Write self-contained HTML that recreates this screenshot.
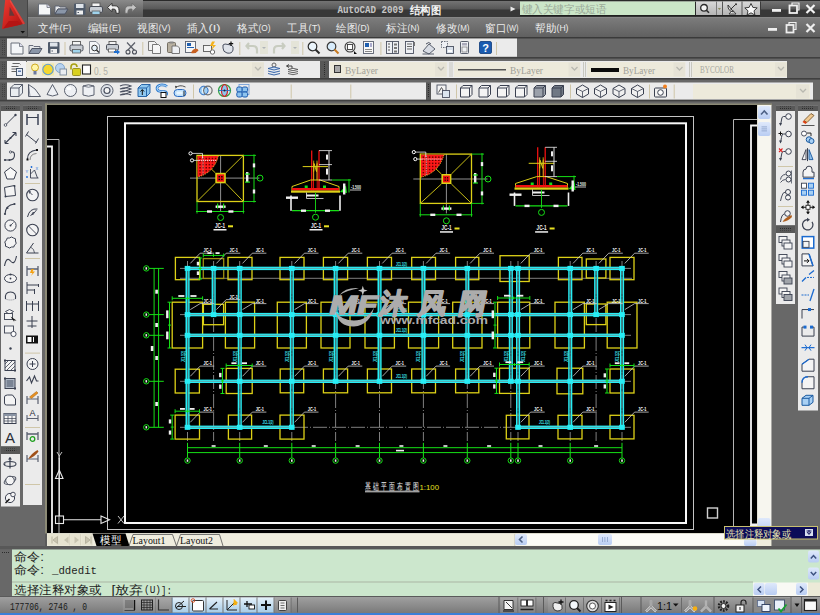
<!DOCTYPE html>
<html><head><meta charset="utf-8">
<style>
html,body{margin:0;padding:0;width:820px;height:615px;overflow:hidden;background:#686868;}
svg{position:absolute;left:0;top:0;display:block;}

</style></head>
<body>
<svg width="820" height="615" viewBox="0 0 820 615" font-family="Liberation Sans, sans-serif">
<defs>
<linearGradient id="gTitleTop" x1="0" y1="0" x2="0" y2="1"><stop offset="0" stop-color="#747474"/><stop offset="1" stop-color="#565656"/></linearGradient>
<linearGradient id="gQat" x1="0" y1="0" x2="0" y2="1"><stop offset="0" stop-color="#8a8a8a"/><stop offset="0.55" stop-color="#6e6e6e"/><stop offset="1" stop-color="#5a5a5a"/></linearGradient>
<linearGradient id="gMenu" x1="0" y1="0" x2="0" y2="1"><stop offset="0" stop-color="#7d7d7d"/><stop offset="1" stop-color="#5e5e5e"/></linearGradient>
<linearGradient id="gStatus" x1="0" y1="0" x2="0" y2="1"><stop offset="0" stop-color="#a2a2a2"/><stop offset="1" stop-color="#7a7a7a"/></linearGradient>
<linearGradient id="gBtnBlue" x1="0" y1="0" x2="0" y2="1"><stop offset="0" stop-color="#e4f1fa"/><stop offset="1" stop-color="#a7cce6"/></linearGradient>
<linearGradient id="gBtnGray" x1="0" y1="0" x2="0" y2="1"><stop offset="0" stop-color="#a8a8a8"/><stop offset="1" stop-color="#868686"/></linearGradient>
<linearGradient id="gSrchBtn" x1="0" y1="0" x2="0" y2="1"><stop offset="0" stop-color="#d8d8d8"/><stop offset="1" stop-color="#b4b4b4"/></linearGradient>
<linearGradient id="gScrollBtn" x1="0" y1="0" x2="0" y2="1"><stop offset="0" stop-color="#dfe9fb"/><stop offset="1" stop-color="#b9cdf3"/></linearGradient>
<linearGradient id="gLogo" x1="0" y1="0" x2="1" y2="1"><stop offset="0" stop-color="#f03a30"/><stop offset="1" stop-color="#a80e0e"/></linearGradient>
<pattern id="pGrip" x="0" y="0" width="2" height="2" patternUnits="userSpaceOnUse"><rect x="0" y="0" width="1" height="1" fill="#2c2c2c"/></pattern>
</defs>
<rect x="0" y="0" width="820" height="615" fill="#686868"/>
<rect x="0" y="0" width="820" height="17" fill="#383838"/>
<rect x="0" y="1" width="820" height="8.5" fill="url(#gTitleTop)"/>
<rect x="0" y="0" width="820" height="1" fill="#2a2a2a"/>
<rect x="28" y="0" width="115" height="17" fill="url(#gQat)"/>
<rect x="0" y="17" width="820" height="21" fill="url(#gMenu)"/>
<rect x="0" y="17" width="820" height="0.8" fill="#8a8a8a"/>
<rect x="0" y="37" width="820" height="1.5" fill="#3a3a3a"/>
<rect x="0" y="0" width="28" height="37" fill="#5c5c5c"/>
<rect x="27" y="0" width="1" height="37" fill="#464646"/>
<rect x="0" y="36" width="28" height="1" fill="#464646"/>
<path d="M5.2 0 H10.5 L25 23.5 L2 29 Z" fill="url(#gLogo)"/>
<path d="M9.2 15.8 L9.8 6.8 L14.6 15.8 Z" fill="#6a3636"/>
<path d="M8.8 21 H17.8 L21.5 24.6 L3.2 28.4 Z" fill="#b51414"/>
<path d="M10.5 0 L25 23.5 L23 24.5 L9.5 1 Z" fill="#f25a50" opacity="0.6"/>
<path d="M20.5 31 H25 L22.75 33.5 Z" fill="#111"/>
<g transform="translate(37 2.5)"><path d="M1.5 1.5 H10 L13.5 5 V12.5 H1.5 Z" fill="#f4f6f8" stroke="#6a707a" stroke-width="1"/><path d="M10 1.5 V5 H13.5" fill="#dde" stroke="#6a707a" stroke-width="0.8"/></g>
<g transform="translate(54 3)"><path d="M1 3 H5 L6 4 H12 V6 H4 L1 11 Z" fill="#e6e8ea" stroke="#5a6070" stroke-width="0.9"/><path d="M1 11 L4 6 H14 L11 11 Z" fill="#8a96a8" stroke="#4a5060" stroke-width="0.9"/></g>
<g transform="translate(73 2.5)"><rect x="1" y="1" width="11.5" height="11.5" rx="1" fill="#4f5a6a"/><rect x="3" y="1.5" width="7.5" height="4" fill="#dfe4ea"/><rect x="3.5" y="8" width="6.5" height="4" fill="#f0f0f0"/><rect x="4.5" y="9.5" width="1.5" height="1" fill="#4f5a6a"/></g>
<g transform="translate(89 2.5)"><rect x="3" y="0.5" width="8" height="4" fill="#f4f4f4" stroke="#5a5a5a" stroke-width="0.9"/><rect x="0.5" y="4" width="13" height="6" rx="1.5" fill="#c8cdd4" stroke="#4a4e58" stroke-width="1"/><rect x="3" y="8.5" width="8" height="3.5" fill="#9fd3ec" stroke="#5a5a5a" stroke-width="0.8"/></g>
<g transform="translate(107 2.5)"><path d="M0.5 5 L5 0.8 V3.3 H8 Q12 3.3 12 8 V10.8 H9.2 Q9.2 6.6 7.2 6.6 H5 V9.2 Z" fill="#eeeeee" stroke="#2e2e2e" stroke-width="0.9"/></g>
<g transform="translate(124 2.5)"><path d="M12.5 5 L8 0.8 V3.3 H5 Q1 3.3 1 8 V10.8 H3.8 Q3.8 6.6 5.8 6.6 H8 V9.2 Z" fill="#c4c4c4" stroke="#6a6a6a" stroke-width="0.9"/></g>
<text x="337.5" y="13" font-family="Liberation Mono" font-size="11" font-weight="bold" fill="#c8c8c8" textLength="66" lengthAdjust="spacingAndGlyphs">AutoCAD 2009</text>
<text x="410" y="13.5" font-size="11" font-weight="bold" fill="#f4f4f4" textLength="31" lengthAdjust="spacingAndGlyphs">结构图</text>
<path d="M510.5 6.5 L515.5 9 L510.5 11.5 Z" fill="#eaeaea"/>
<rect x="520" y="1.5" width="176" height="14" fill="#cbe6c8"/>
<rect x="520" y="15" width="176" height="1.2" fill="#202020"/>
<text x="521.5" y="12.8" font-size="11" fill="#9aaa98" textLength="85" lengthAdjust="spacingAndGlyphs">键入关键字或短语</text>
<rect x="695" y="1.5" width="65" height="14" fill="url(#gSrchBtn)"/>
<rect x="695" y="1.5" width="1" height="14" fill="#2a2a2a"/>
<rect x="716" y="1.5" width="1" height="14" fill="#7a7a7a"/>
<rect x="722" y="1.5" width="1" height="14" fill="#555"/>
<rect x="741.5" y="1.5" width="1" height="14" fill="#555"/>
<rect x="760" y="1.5" width="1" height="14" fill="#3a3a3a"/>
<rect x="695" y="15" width="65" height="1.2" fill="#202020"/>
<circle cx="704" cy="7.8" r="3.3" fill="#f4f4f4" stroke="#2a2a2a" stroke-width="1.3"/><line x1="706.4" y1="10.2" x2="709" y2="12.8" stroke="#2a2a2a" stroke-width="1.6"/>
<path d="M717.8 8 H721 L719.4 10 Z" fill="#8a8a60"/>
<g transform="translate(726 2.5)"><path d="M3 11.5 H10 L6.5 7.5 Z" fill="#e8e8e8" stroke="#333" stroke-width="0.9"/><path d="M2 2.5 Q1.5 8.5 7.5 9.5 Z" fill="#f4f4f4" stroke="#333" stroke-width="1"/><path d="M4.5 7 L9.5 2" stroke="#333" stroke-width="1"/><circle cx="10" cy="1.8" r="1" fill="#333"/></g>
<path d="M751 3.5 L752.9 7.4 L757.2 7.9 L754 10.8 L754.9 15 L751 12.8 L747.1 15 L748 10.8 L744.8 7.9 L749.1 7.4 Z" fill="#fafafa" stroke="#2a2a2a" stroke-width="0.9"/>
<rect x="772" y="9" width="9" height="2.8" fill="#f0f0f0"/>
<rect x="789.5" y="5.5" width="7.5" height="7.5" fill="none" stroke="#f0f0f0" stroke-width="1.8"/><path d="M792 5 V3 H799 V10 H797" fill="none" stroke="#f0f0f0" stroke-width="1.2"/>
<path d="M806.5 5 L814.5 13 M814.5 5 L806.5 13" stroke="#f4f4f4" stroke-width="2.2"/>
<rect x="768" y="28" width="9" height="2.8" fill="#eeeeee"/>
<rect x="786.5" y="25" width="7" height="7.5" fill="none" stroke="#eeeeee" stroke-width="1.8"/><path d="M789 24.5 V22.5 H796 V29.5 H794" fill="none" stroke="#eeeeee" stroke-width="1.2"/>
<path d="M806.5 24 L814.5 32 M814.5 24 L806.5 32" stroke="#eeeeee" stroke-width="2.2"/>
<text x="38" y="31.5" font-size="11" fill="#ececec" textLength="21" lengthAdjust="spacingAndGlyphs">文件</text>
<text x="59.5" y="31" font-size="9" fill="#ececec" textLength="12" lengthAdjust="spacingAndGlyphs">(F)</text>
<text x="87.5" y="31.5" font-size="11" fill="#ececec" textLength="21" lengthAdjust="spacingAndGlyphs">编辑</text>
<text x="109" y="31" font-size="9" fill="#ececec" textLength="12" lengthAdjust="spacingAndGlyphs">(E)</text>
<text x="137" y="31.5" font-size="11" fill="#ececec" textLength="21" lengthAdjust="spacingAndGlyphs">视图</text>
<text x="158.5" y="31" font-size="9" fill="#ececec" textLength="12" lengthAdjust="spacingAndGlyphs">(V)</text>
<text x="187" y="31.5" font-size="11" fill="#ececec" textLength="21" lengthAdjust="spacingAndGlyphs">插入</text>
<text x="208.5" y="31" font-size="9" fill="#ececec" textLength="12" lengthAdjust="spacingAndGlyphs">(I)</text>
<text x="237" y="31.5" font-size="11" fill="#ececec" textLength="21" lengthAdjust="spacingAndGlyphs">格式</text>
<text x="258.5" y="31" font-size="9" fill="#ececec" textLength="12" lengthAdjust="spacingAndGlyphs">(O)</text>
<text x="287" y="31.5" font-size="11" fill="#ececec" textLength="21" lengthAdjust="spacingAndGlyphs">工具</text>
<text x="308.5" y="31" font-size="9" fill="#ececec" textLength="12" lengthAdjust="spacingAndGlyphs">(T)</text>
<text x="336" y="31.5" font-size="11" fill="#ececec" textLength="21" lengthAdjust="spacingAndGlyphs">绘图</text>
<text x="357.5" y="31" font-size="9" fill="#ececec" textLength="12" lengthAdjust="spacingAndGlyphs">(D)</text>
<text x="386" y="31.5" font-size="11" fill="#ececec" textLength="21" lengthAdjust="spacingAndGlyphs">标注</text>
<text x="407.5" y="31" font-size="9" fill="#ececec" textLength="12" lengthAdjust="spacingAndGlyphs">(N)</text>
<text x="436" y="31.5" font-size="11" fill="#ececec" textLength="21" lengthAdjust="spacingAndGlyphs">修改</text>
<text x="457.5" y="31" font-size="9" fill="#ececec" textLength="12" lengthAdjust="spacingAndGlyphs">(M)</text>
<text x="485" y="31.5" font-size="11" fill="#ececec" textLength="21" lengthAdjust="spacingAndGlyphs">窗口</text>
<text x="506.5" y="31" font-size="9" fill="#ececec" textLength="12" lengthAdjust="spacingAndGlyphs">(W)</text>
<text x="535" y="31.5" font-size="11" fill="#ececec" textLength="21" lengthAdjust="spacingAndGlyphs">帮助</text>
<text x="556.5" y="31" font-size="9" fill="#ececec" textLength="12" lengthAdjust="spacingAndGlyphs">(H)</text>
<rect x="0" y="38.5" width="7" height="19" fill="#585858"/>
<rect x="2.5" y="40" width="2" height="15" fill="url(#pGrip)"/>
<rect x="7" y="38.5" width="510" height="18.5" fill="#ebebeb"/>
<rect x="7" y="56.3" width="510" height="0.8" fill="#bdbdbd"/>
<g transform="translate(9.5 41.5)"><path d="M1.5 1.5 H10 L13.5 5 V12.5 H1.5 Z" fill="#f4f6f8" stroke="#6a707a" stroke-width="1"/><path d="M10 1.5 V5 H13.5" fill="#dde" stroke="#6a707a" stroke-width="0.8"/></g>
<g transform="translate(28 42.5)"><path d="M1 3 H5 L6 4 H12 V6 H4 L1 11 Z" fill="#e6e8ea" stroke="#5a6070" stroke-width="0.9"/><path d="M1 11 L4 6 H14 L11 11 Z" fill="#8a96a8" stroke="#4a5060" stroke-width="0.9"/></g>
<g transform="translate(47 41)"><rect x="1" y="1" width="11.5" height="11.5" rx="1" fill="#4f5a6a"/><rect x="3" y="1.5" width="7.5" height="4" fill="#dfe4ea"/><rect x="3.5" y="8" width="6.5" height="4" fill="#f0f0f0"/><rect x="4.5" y="9.5" width="1.5" height="1" fill="#4f5a6a"/></g>
<g transform="translate(69.5 41)"><rect x="3" y="0.5" width="8" height="4" fill="#f4f4f4" stroke="#5a5a5a" stroke-width="0.9"/><rect x="0.5" y="4" width="13" height="6" rx="1.5" fill="#c8cdd4" stroke="#4a4e58" stroke-width="1"/><rect x="3" y="8.5" width="8" height="3.5" fill="#9fd3ec" stroke="#5a5a5a" stroke-width="0.8"/></g>
<g transform="translate(88 41)"><path d="M1.5 0.5 H8 L11.5 4 V12.5 H1.5 Z" fill="#f4f6f8" stroke="#7a808a" stroke-width="0.9"/><circle cx="6.5" cy="7" r="2.8" fill="#e8f4fc" stroke="#333" stroke-width="1"/><line x1="8.5" y1="9" x2="11" y2="11.5" stroke="#333" stroke-width="1.4"/></g>
<g transform="translate(106 41)"><rect x="3" y="0.5" width="7" height="3.5" fill="#f4f4f4" stroke="#5a5a5a" stroke-width="0.9"/><rect x="0.5" y="3.5" width="12" height="5.5" rx="1.2" fill="#c8cdd4" stroke="#4a4e58" stroke-width="1"/><rect x="2.5" y="8" width="7" height="3" fill="#fff" stroke="#5a5a5a" stroke-width="0.8"/><path d="M8 10 H11 V8.5 L14 11 L11 13.5 V12 H8 Z" fill="#1f6fd0"/></g>
<g transform="translate(125 41.5)"><path d="M2 1 L9.5 9 M10 1 L2.5 9" stroke="#5a5e68" stroke-width="1.2"/><circle cx="3" cy="10.5" r="2" fill="none" stroke="#4a4e58" stroke-width="1.1"/><circle cx="9.5" cy="10.5" r="2" fill="none" stroke="#4a4e58" stroke-width="1.1"/></g>
<g transform="translate(148 41)"><path d="M0.5 0.5 H6.5 L8.5 2.5 V9.5 H0.5 Z" fill="#f2f2f2" stroke="#6a6a6a" stroke-width="0.9"/><path d="M4.5 3.5 H10.5 L12.5 5.5 V12.5 H4.5 Z" fill="#f6f6f6" stroke="#6a6a6a" stroke-width="0.9"/></g>
<g transform="translate(167 41)"><rect x="0.5" y="1.5" width="8" height="10" rx="1" fill="#b8b0a0" stroke="#6a6458" stroke-width="0.9"/><rect x="2.5" y="0.5" width="4" height="2" fill="#888"/><path d="M5 5 H10.5 L12.5 7 V12.5 H5 Z" fill="#eef0f4" stroke="#6a6a6a" stroke-width="0.9"/></g>
<g transform="translate(185 41)"><rect x="0.5" y="0.5" width="10" height="11" fill="#f6f6f6" stroke="#5a6070" stroke-width="0.9"/><rect x="2" y="2" width="4" height="3" fill="#1f5fb0"/><rect x="2" y="6" width="7" height="1" fill="#1f5fb0"/><path d="M6 12 Q8 7 12.5 8 L13.5 9.5 Q11 13 6 12 Z" fill="#c86020"/></g>
<g transform="translate(203 41)"><rect x="0.5" y="4.5" width="8" height="6" fill="#f4f4f4" stroke="#5a5a5a" stroke-width="0.9"/><path d="M9 0.5 L7 5 H10 L8 9.5 L13 4 H10 L12 0.5 Z" fill="#f4b21a"/><circle cx="9.5" cy="11" r="2.2" fill="#fff" stroke="#5a5a5a" stroke-width="0.9"/></g>
<g transform="translate(221 41)"><path d="M2 7 Q1 3 4 3 L10 4 Q13 5 12 9 Q11 13 6 12 Q2 11 2 7 Z" fill="#dfe3ea" stroke="#4a5060" stroke-width="1"/><path d="M10 0.5 V5 M7.8 2.7 H12.2" stroke="#111" stroke-width="1.2"/></g>
<g transform="translate(246 41)"><path d="M3 2 L0.5 5 L3 8 M0.8 5 H7 Q11 5 11 9 V12.5" fill="none" stroke="#c8ccc0" stroke-width="2.2"/></g>
<g transform="translate(273 41)"><path d="M9 2 L11.5 5 L9 8 M11.2 5 H5 Q1 5 1 9 V12.5" fill="none" stroke="#c8ccc0" stroke-width="2.2"/></g>
<g transform="translate(307 41)"><circle cx="5.5" cy="5.5" r="4.3" fill="#eaf4fb" stroke="#2a2a2a" stroke-width="1.2"/><line x1="8.5" y1="8.5" x2="12.5" y2="12.5" stroke="#2a2a2a" stroke-width="2"/></g>
<g transform="translate(326 41)"><circle cx="5.5" cy="5.5" r="4.3" fill="#d8ecfb" stroke="#3a3a3a" stroke-width="1.2"/><line x1="8.5" y1="8.5" x2="12.5" y2="12.5" stroke="#c87a20" stroke-width="2"/></g>
<g transform="translate(344 41)"><circle cx="6" cy="6" r="5" fill="#eaeaea" stroke="#3a3a3a" stroke-width="1.1"/><rect x="3.5" y="3.5" width="5" height="5" fill="#fff" stroke="#3a3a3a" stroke-width="0.9"/><path d="M10 10 L13 13 L10 13 Z" fill="#111"/></g>
<g transform="translate(363 41)"><rect x="0.5" y="0.5" width="10" height="12" fill="#f8f8f8" stroke="#5a6070" stroke-width="0.9"/><rect x="2" y="2" width="4" height="4" fill="#1f5fb0"/><rect x="2" y="8" width="7" height="1" fill="#888"/><rect x="2" y="10" width="7" height="1" fill="#888"/><rect x="7" y="2" width="2" height="4" fill="#aac"/></g>
<g transform="translate(386 41)"><rect x="0.5" y="0.5" width="12" height="12" fill="#eef0f4" stroke="#4a5060" stroke-width="0.9"/><line x1="6.5" y1="0.5" x2="6.5" y2="12.5" stroke="#4a5060" stroke-width="0.9"/><rect x="2" y="2.5" width="2" height="1" fill="#555"/><rect x="2" y="5.5" width="2" height="1" fill="#555"/><rect x="2" y="8.5" width="2" height="1" fill="#555"/><rect x="8" y="2.5" width="3" height="2" fill="#777"/><rect x="8" y="6" width="3" height="2" fill="#777"/><rect x="8" y="9.5" width="3" height="2" fill="#777"/></g>
<g transform="translate(405 41)"><rect x="0.5" y="0.5" width="8" height="12" fill="#eef0f4" stroke="#4a5060" stroke-width="0.9"/><rect x="2" y="2.5" width="5" height="1" fill="#666"/><rect x="2" y="5" width="5" height="1" fill="#666"/><rect x="2" y="7.5" width="5" height="1" fill="#666"/><rect x="8.5" y="1" width="1.5" height="4" fill="#777"/></g>
<g transform="translate(422 41)"><path d="M1 10 L7 3 L13 8 L7 13 Z" fill="#d8dce4" stroke="#4a5060" stroke-width="0.9"/><path d="M4 3 Q7 0 9 3" fill="none" stroke="#4a5060"/><line x1="0.5" y1="13" x2="12" y2="13" stroke="#4a5060" stroke-width="0.9"/></g>
<g transform="translate(441 41)"><rect x="0.5" y="0.5" width="6" height="6" fill="#eef0f4" stroke="#4a5060" stroke-width="0.8" stroke-dasharray="1.5 1"/><rect x="5.5" y="5.5" width="7" height="7" fill="#d8e0ea" stroke="#4a5060" stroke-width="0.9"/><rect x="7" y="9" width="4" height="2" fill="#fff"/></g>
<g transform="translate(459 41)"><rect x="1.5" y="0.5" width="8" height="12" rx="0.8" fill="#eef0f4" stroke="#4a5060" stroke-width="0.9"/><rect x="3" y="2" width="5" height="2.5" fill="#aab"/><rect x="3" y="6" width="5" height="5" fill="none" stroke="#666" stroke-width="0.6"/></g>
<g transform="translate(479 41)"><rect x="0.5" y="0.5" width="12" height="12" rx="1.5" fill="#1a5bb0" stroke="#0e3a78" stroke-width="0.8"/><text x="6.5" y="11" font-size="11" font-weight="bold" fill="#fff" text-anchor="middle">?</text></g>
<rect x="260" y="41" width="8" height="13" fill="#e4e4d8"/>
<g transform="translate(262 47)"><path d="M0 0 H4 L2 2 Z" fill="#b0b4b8"/></g>
<rect x="291" y="41" width="8" height="13" fill="#e4e4d8"/>
<g transform="translate(293 47)"><path d="M0 0 H4 L2 2 Z" fill="#b0b4b8"/></g>
<rect x="246" y="41" width="14" height="13" fill="#e4e4d8"  opacity="0"/>
<rect x="64.5" y="42" width="1" height="13" fill="#cfc6a8"/>
<rect x="142.3" y="42" width="1" height="13" fill="#cfc6a8"/>
<rect x="239.3" y="42" width="1" height="13" fill="#cfc6a8"/>
<rect x="302.3" y="42" width="1" height="13" fill="#cfc6a8"/>
<rect x="380.4" y="42" width="1" height="13" fill="#cfc6a8"/>
<rect x="496" y="42" width="1" height="13" fill="#cfc6a8"/>
<rect x="0" y="57" width="820" height="1.6" fill="#404040"/>
<rect x="0" y="61" width="7" height="17" fill="#585858"/>
<rect x="2.5" y="62.5" width="2" height="14" fill="url(#pGrip)"/>
<rect x="7" y="61" width="19" height="17" fill="#f2f2f2"/>
<rect x="27" y="61" width="293" height="17" fill="#ebebeb"/>
<rect x="26" y="62" width="238" height="15" fill="#edeadb"/>
<rect x="252" y="62.5" width="12" height="14" fill="#e6e3d6"/>
<g transform="translate(252 63)"><path d="M3 4 L6 7 L9 4" fill="none" stroke="#b8b8b0" stroke-width="1.3"/></g>
<g transform="translate(9.5 62.5)"><path d="M2 4 H9 M2 6.5 H9 M2 9 H7" stroke="#555" stroke-width="0.9"/><path d="M3 1 H10 L11 2" fill="none" stroke="#555" stroke-width="0.9"/><rect x="7" y="6" width="6" height="7" fill="#e8eef8" stroke="#3a4a60" stroke-width="0.9"/><rect x="8.5" y="8" width="3" height="1.5" fill="#5a7ab0"/></g>
<g transform="translate(31 63)"><circle cx="4" cy="4.5" r="3.5" fill="#fff6a8" stroke="#c8a010" stroke-width="0.9"/><rect x="2.5" y="8" width="3" height="3.5" fill="#6a78a0"/></g>
<g transform="translate(42 63.5)"><rect x="0" y="0" width="12" height="12" fill="#f4e8a0"/><circle cx="6" cy="6" r="5.2" fill="#f4d830" stroke="#5a9ad8" stroke-width="1.1"/></g>
<g transform="translate(55 63)"><circle cx="5" cy="5" r="4.5" fill="#b8d4f0" stroke="#7aa0c8" stroke-width="0.9"/><rect x="5" y="6" width="6.5" height="6" fill="#e8ecf0" stroke="#7a8a9a" stroke-width="0.9"/></g>
<g transform="translate(70 63.5)"><path d="M1 6 V3.5 Q1 0.5 4 0.5 Q7 0.5 7 3.5" fill="none" stroke="#a8a010" stroke-width="1.6"/><rect x="2.5" y="5" width="8" height="7" rx="1" fill="#d8d020" stroke="#8a8010" stroke-width="0.8"/></g>
<g transform="translate(82 64.5)"><rect x="0.5" y="0.5" width="8" height="9" fill="#fff" stroke="#222" stroke-width="1.1"/></g>
<text x="94" y="74.5" font-size="11" fill="#b0b0a8" textLength="14" lengthAdjust="spacingAndGlyphs">0. 5</text>
<g transform="translate(267 62.5)"><circle cx="7" cy="2.5" r="2" fill="none" stroke="#555" stroke-width="0.9"/><path d="M1 6 L7 4.5 L13 6 L7 7.5 Z M1 8.5 L7 10 L13 8.5 M1 11 L7 12.5 L13 11" fill="#cfe0f4" stroke="#2a5aa0" stroke-width="0.9"/></g>
<g transform="translate(285 62.5)"><path d="M4 2 L1.5 3.5 L4 5 M1.8 3.5 H7 V6" fill="none" stroke="#333" stroke-width="0.9"/><path d="M3 7 L8 5.8 L13 7 L8 8.2 Z M3 9 L8 10.2 L13 9 M3 11 L8 12.2 L13 11" fill="#f4f4f4" stroke="#555" stroke-width="0.9"/></g>
<rect x="320" y="61" width="9" height="17" fill="#585858"/>
<rect x="323.5" y="62.5" width="2" height="14" fill="url(#pGrip)"/>
<rect x="329" y="61" width="458" height="17" fill="#ebebeb"/>
<rect x="330" y="62" width="117" height="15" fill="#edeadb"/>
<rect x="435" y="62.5" width="11.5" height="14" fill="#e6e3d6"/>
<g transform="translate(435 63)"><path d="M3 4 L6 7 L9 4" fill="none" stroke="#b8b8b0" stroke-width="1.3"/></g>
<rect x="454" y="62" width="126.5" height="15" fill="#edeadb"/>
<rect x="568.5" y="62.5" width="11.5" height="14" fill="#e6e3d6"/>
<g transform="translate(568.5 63)"><path d="M3 4 L6 7 L9 4" fill="none" stroke="#b8b8b0" stroke-width="1.3"/></g>
<rect x="587" y="62" width="98.5" height="15" fill="#edeadb"/>
<rect x="673.5" y="62.5" width="11.5" height="14" fill="#e6e3d6"/>
<g transform="translate(673.5 63)"><path d="M3 4 L6 7 L9 4" fill="none" stroke="#b8b8b0" stroke-width="1.3"/></g>
<rect x="692.5" y="62" width="94.5" height="15" fill="#edeadb"/>
<rect x="775" y="62.5" width="11.5" height="14" fill="#e6e3d6"/>
<g transform="translate(775 63)"><path d="M3 4 L6 7 L9 4" fill="none" stroke="#b8b8b0" stroke-width="1.3"/></g>
<rect x="449.5" y="62" width="1" height="15" fill="#c8c8c0"/>
<rect x="451.5" y="62" width="1" height="15" fill="#c8c8c0"/>
<rect x="583" y="62" width="1" height="15" fill="#c8c8c0"/>
<rect x="585" y="62" width="1" height="15" fill="#c8c8c0"/>
<rect x="689" y="62" width="1" height="15" fill="#c8c8c0"/>
<rect x="691" y="62" width="1" height="15" fill="#c8c8c0"/>
<rect x="334.5" y="65.5" width="6" height="7" fill="#a8a8a8" stroke="#333" stroke-width="1"/>
<text x="345" y="74" font-family="Liberation Serif" font-size="11" fill="#a0a098" textLength="33" lengthAdjust="spacingAndGlyphs">ByLayer</text>
<rect x="458" y="69" width="48" height="1.5" fill="#555"/>
<text x="510" y="74" font-family="Liberation Serif" font-size="11" fill="#a0a098" textLength="33" lengthAdjust="spacingAndGlyphs">ByLayer</text>
<rect x="591" y="68" width="28" height="4" fill="#0a0a0a"/>
<text x="623" y="74" font-family="Liberation Serif" font-size="11" fill="#a0a098" textLength="32" lengthAdjust="spacingAndGlyphs">ByLayer</text>
<text x="700" y="73" font-family="Liberation Serif" font-size="9.5" fill="#a8a8a0" textLength="34" lengthAdjust="spacingAndGlyphs">BYCOLOR</text>
<rect x="0" y="78" width="820" height="1.6" fill="#404040"/>
<rect x="0" y="82.5" width="7" height="17.5" fill="#585858"/>
<rect x="2.5" y="84" width="2" height="14" fill="url(#pGrip)"/>
<rect x="7" y="82.5" width="419" height="17.2" fill="#ebebeb"/>
<g transform="translate(10 84)"><path d="M0.5 4 L4 0.5 H12.5 V9 L9 12.5 H0.5 Z" fill="#e8ecf0" stroke="#4a5060" stroke-width="0.9"/><path d="M0.5 4 H9 V12.5 M9 4 L12.5 0.5" fill="none" stroke="#4a5060" stroke-width="0.9"/></g>
<g transform="translate(28 84)"><path d="M0.5 0.5 L7 5 L12.5 12.5 H0.5 Z" fill="#eef0f4" stroke="#4a5060" stroke-width="0.9"/><path d="M0.5 0.5 L2 12.5" stroke="#4a5060" stroke-width="0.6"/></g>
<g transform="translate(46 84)"><path d="M6.5 0.5 L12 10.5 Q6.5 13.5 1 10.5 Z" fill="#eef0f4" stroke="#4a5060" stroke-width="0.9"/></g>
<g transform="translate(64 84)"><circle cx="6.5" cy="6.5" r="6" fill="#eef0f4" stroke="#4a5060" stroke-width="0.9"/><ellipse cx="5" cy="4.5" rx="2.5" ry="1.5" fill="#fff"/></g>
<g transform="translate(82 84)"><path d="M1 2 Q6.5 -0.5 12 2 V11 Q6.5 13.5 1 11 Z" fill="#eef0f4" stroke="#4a5060" stroke-width="0.9"/><path d="M1 2 Q6.5 4.5 12 2" fill="none" stroke="#4a5060" stroke-width="0.7"/></g>
<g transform="translate(100.5 84)"><circle cx="6.5" cy="6.5" r="6" fill="#e0e4ea" stroke="#4a5060" stroke-width="0.9"/><circle cx="6.5" cy="6.5" r="3" fill="#f4f4f4" stroke="#4a5060" stroke-width="1.2"/></g>
<g transform="translate(119 84)"><path d="M1 2 Q6.5 -0.5 12 2 Q6.5 4.5 1 5 Q6.5 2.5 12 5 Q6.5 7.5 1 8 Q6.5 5.5 12 8 Q6.5 10.5 1 11 Q6.5 8.5 12 11" fill="none" stroke="#4a5060" stroke-width="1.1"/></g>
<g transform="translate(137.5 84)"><path d="M0.5 4 L4 0.5 H12.5 V9 L9 12.5 H0.5 Z" fill="#8fc8f0" stroke="#1a5aa0" stroke-width="0.9"/><path d="M0.5 4 H9 V12.5 M9 4 L12.5 0.5" fill="none" stroke="#1a5aa0" stroke-width="0.9"/><path d="M4.8 11 V6 M3 7.5 L4.8 5.5 L6.6 7.5" fill="none" stroke="#111" stroke-width="1"/></g>
<g transform="translate(155.5 84)"><path d="M11.5 2.5 Q9 0.5 5 1 Q1 2 1.5 5 Q2 7.5 6 7.5 L9 7.5 Q12 8 11 11" fill="none" stroke="#2a7ad0" stroke-width="2.6"/><path d="M11.5 2.5 Q9 0.5 5 1 Q1 2 1.5 5 Q2 7.5 6 7.5 L9 7.5 Q12 8 11 11" fill="none" stroke="#bfe0fa" stroke-width="1"/><rect x="5.5" y="8.5" width="5" height="5" fill="#fff" stroke="#111" stroke-width="1"/></g>
<g transform="translate(173.5 84)"><path d="M2 4 Q6 0 12 3" fill="none" stroke="#555" stroke-width="1"/><path d="M2 4 L1.5 1.8 L4 2.5" fill="#333"/><rect x="0.5" y="5.5" width="12" height="7" rx="3.5" fill="#bfe0fa" stroke="#2a6ac0" stroke-width="1"/><rect x="3" y="7.5" width="6" height="3" rx="1" fill="#e6f4fe"/><path d="M10.5 7 V12" stroke="#111" stroke-width="0.9"/></g>
<g transform="translate(199 84)"><circle cx="4.8" cy="6.5" r="4.3" fill="#9fd0f6" stroke="#2a6ac0" stroke-width="1"/><circle cx="8.8" cy="6.5" r="4.3" fill="none" stroke="#707070" stroke-width="1.2"/><path d="M4 3.5 Q3 6.5 4 9.5" fill="none" stroke="#fff" stroke-width="0.9"/></g>
<g transform="translate(218 84)"><circle cx="6.5" cy="6.5" r="6" fill="#cfe6f8" stroke="#30a040" stroke-width="1.2"/><ellipse cx="6.5" cy="6.5" rx="3" ry="5.8" fill="#8fc4ee" stroke="#d02020" stroke-width="1.2"/><path d="M0.5 6.5 H12.5" stroke="#2a6ac0" stroke-width="0.9"/><circle cx="6.5" cy="6.5" r="1" fill="#222"/></g>
<g transform="translate(236 84)"><rect x="3" y="0.5" width="10" height="10" fill="none" stroke="#6a9ad8" stroke-width="0.8"/><rect x="0.8" y="3" width="5.4" height="5" rx="1.6" fill="#8fc4ee" stroke="#1a5ab0" stroke-width="1"/><rect x="6.2" y="3" width="5.4" height="5" rx="1.6" fill="#8fc4ee" stroke="#1a5ab0" stroke-width="1"/><rect x="0.8" y="8" width="5.4" height="5" rx="1.6" fill="#8fc4ee" stroke="#1a5ab0" stroke-width="1"/><rect x="6.2" y="8" width="5.4" height="5" rx="1.6" fill="#8fc4ee" stroke="#1a5ab0" stroke-width="1"/></g>
<rect x="193" y="84.5" width="1" height="14" fill="#cfc6a8"/>
<rect x="290.7" y="84.5" width="1" height="14" fill="#cfc6a8"/>
<rect x="350.3" y="84.5" width="1" height="14" fill="#cfc6a8"/>
<rect x="426" y="82.5" width="5" height="17.5" fill="#585858"/>
<rect x="427.5" y="84" width="2" height="14" fill="url(#pGrip)"/>
<rect x="431" y="82.5" width="382" height="17.2" fill="#ebebeb"/>
<g transform="translate(436.5 84.5)"><rect x="0.5" y="0.5" width="9" height="9" fill="#f4f4f4" stroke="#4a5060" stroke-width="0.9"/><path d="M2 8 L5 3 L8 8" fill="none" stroke="#555"/><rect x="6" y="6" width="7" height="7" fill="#dde6f0" stroke="#4a5060" stroke-width="0.9"/></g>
<g transform="translate(460 85)"><path d="M0.5 3 L3 0.5 H12 V9.5 L9.5 12 H0.5 Z" fill="#f4f4f4" stroke="#3a4050" stroke-width="1"/><path d="M0.5 3 H9.5 V12 M9.5 3 L12 0.5" fill="none" stroke="#3a4050" stroke-width="1"/></g>
<g transform="translate(478.5 85)"><path d="M0.5 3 L3 0.5 H12 V9.5 L9.5 12 H0.5 Z" fill="#f4f4f4" stroke="#3a4050" stroke-width="1"/><path d="M0.5 3 H9.5 V12 M9.5 3 L12 0.5" fill="none" stroke="#3a4050" stroke-width="1"/></g>
<g transform="translate(497 85)"><path d="M0.5 3 L3 0.5 H12 V9.5 L9.5 12 H0.5 Z" fill="#f4f4f4" stroke="#3a4050" stroke-width="1"/><path d="M0.5 3 H9.5 V12 M9.5 3 L12 0.5" fill="none" stroke="#3a4050" stroke-width="1"/></g>
<g transform="translate(515 85)"><path d="M0.5 3 L3 0.5 H12 V9.5 L9.5 12 H0.5 Z" fill="#f4f4f4" stroke="#3a4050" stroke-width="1"/><path d="M0.5 3 H9.5 V12 M9.5 3 L12 0.5" fill="none" stroke="#3a4050" stroke-width="1"/></g>
<g transform="translate(533.5 85)"><path d="M0.5 3 L3 0.5 H12 V9.5 L9.5 12 H0.5 Z" fill="#9aa0aa" stroke="#3a4050" stroke-width="1"/><path d="M0.5 3 H9.5 V12 M9.5 3 L12 0.5" fill="none" stroke="#3a4050" stroke-width="1"/></g>
<g transform="translate(551.5 85)"><path d="M0.5 3 L3 0.5 H12 V9.5 L9.5 12 H0.5 Z" fill="#707884" stroke="#3a4050" stroke-width="1"/><path d="M0.5 3 H9.5 V12 M9.5 3 L12 0.5" fill="none" stroke="#3a4050" stroke-width="1"/></g>
<g transform="translate(576 84.5)"><path d="M6.5 0.5 L12.5 4 V9.5 L6.5 13 L0.5 9.5 V4 Z" fill="#f0f0f0" stroke="#3a4050" stroke-width="1"/><path d="M0.5 4 L6.5 7 L12.5 4 M6.5 7 V13" fill="none" stroke="#3a4050" stroke-width="0.8"/></g>
<g transform="translate(594 84.5)"><path d="M6.5 0.5 L12.5 4 V9.5 L6.5 13 L0.5 9.5 V4 Z" fill="#f0f0f0" stroke="#3a4050" stroke-width="1"/><path d="M0.5 4 L6.5 7 L12.5 4 M6.5 7 V13" fill="none" stroke="#3a4050" stroke-width="0.8"/></g>
<g transform="translate(612.5 84.5)"><path d="M6.5 0.5 L12.5 4 V9.5 L6.5 13 L0.5 9.5 V4 Z" fill="#f0f0f0" stroke="#3a4050" stroke-width="1"/><path d="M0.5 4 L6.5 7 L12.5 4 M6.5 7 V13" fill="none" stroke="#3a4050" stroke-width="0.8"/></g>
<g transform="translate(631 84.5)"><path d="M6.5 0.5 L12.5 4 V9.5 L6.5 13 L0.5 9.5 V4 Z" fill="#f0f0f0" stroke="#3a4050" stroke-width="1"/><path d="M0.5 4 L6.5 7 L12.5 4 M6.5 7 V13" fill="none" stroke="#3a4050" stroke-width="0.8"/></g>
<g transform="translate(654 84.5)"><rect x="0.5" y="3.5" width="12" height="9" rx="1" fill="#f0f0f0" stroke="#3a4050" stroke-width="1"/><circle cx="6.5" cy="8" r="2.8" fill="#fff" stroke="#3a4050" stroke-width="1"/><circle cx="11" cy="2" r="2" fill="#f08020"/></g>
<rect x="456" y="84.5" width="1" height="14" fill="#cfc6a8"/>
<rect x="570" y="84.5" width="1" height="14" fill="#cfc6a8"/>
<rect x="649" y="84.5" width="1" height="14" fill="#cfc6a8"/>
<rect x="673.7" y="84.5" width="1" height="14" fill="#cfc6a8"/>
<rect x="693" y="84" width="117" height="15" fill="#edeadb"/>
<rect x="796" y="84.5" width="13" height="14" fill="#e6e3d6"/>
<g transform="translate(797 85)"><path d="M3 4 L6 7 L9 4" fill="none" stroke="#b8b8b0" stroke-width="1.3"/></g>
<rect x="0" y="99.8" width="820" height="1.6" fill="#404040"/>
<rect x="1" y="105" width="19" height="6" fill="#585858"/><rect x="1" y="105" width="19" height="0.8" fill="#7a7a7a"/><rect x="4.8" y="106.5" width="11.4" height="3" fill="url(#pGrip)"/>
<rect x="1" y="111" width="19" height="335" fill="#ebebeb"/>
<rect x="1" y="446" width="19" height="8" fill="#585858"/><rect x="1" y="446" width="19" height="0.8" fill="#7a7a7a"/><rect x="4.8" y="448.5" width="11.4" height="3" fill="url(#pGrip)"/>
<rect x="1" y="454" width="19" height="52.5" fill="#ebebeb"/>
<g transform="translate(3.5 113)"><line x1="2" y1="12" x2="12" y2="2" stroke="#3a4050" stroke-width="1"/><circle cx="2" cy="12" r="1.3" fill="#fff" stroke="#3a4050" stroke-width="0.8"/><circle cx="12" cy="2" r="1.2" fill="#3a4050"/></g>
<g transform="translate(3.5 131)"><path d="M1.5 12.5 L12.5 1.5 M1.5 12.5 L1.5 9 M1.5 12.5 L5 12.5 M12.5 1.5 L9 1.5 M12.5 1.5 L12.5 5" fill="none" stroke="#3a4050" stroke-width="1.1"/><circle cx="7" cy="7" r="1" fill="#3a4050"/></g>
<g transform="translate(3.5 149)"><path d="M1 11 H6 Q11 11 11 6 Q11 2 7 3" fill="none" stroke="#3a4050" stroke-width="1.1"/><circle cx="1.5" cy="11" r="1.1" fill="#3a4050"/><circle cx="6" cy="11" r="1.1" fill="#3a4050"/><circle cx="7" cy="3" r="1.1" fill="#fff" stroke="#3a4050" stroke-width="0.8"/></g>
<g transform="translate(3.5 166.5)"><path d="M7 1 L13 5.5 L10.5 12.5 H3.5 L1 5.5 Z" fill="#f8f8f8" stroke="#3a4050" stroke-width="1"/></g>
<g transform="translate(3.5 184.5)"><path d="M1 3 L11 1 L12 11 L2 12 Z" fill="#f4f4f4" stroke="#3a4050" stroke-width="1"/><circle cx="2" cy="12" r="1" fill="#3a4050"/><circle cx="11" cy="1.5" r="1" fill="#3a4050"/></g>
<g transform="translate(3.5 202)"><path d="M1.5 12 Q2 3 11 2" fill="none" stroke="#3a4050" stroke-width="1.1"/><circle cx="1.5" cy="12" r="1.1" fill="#3a4050"/><circle cx="4" cy="6" r="1.1" fill="#3a4050"/><circle cx="11" cy="2" r="1.1" fill="#3a4050"/></g>
<g transform="translate(3.5 218.5)"><circle cx="7" cy="7" r="5.6" fill="#f4f4f4" stroke="#3a4050" stroke-width="1"/><circle cx="7" cy="7" r="1" fill="#3a4050"/><line x1="7" y1="7" x2="10" y2="4" stroke="#3a4050" stroke-width="0.8"/></g>
<g transform="translate(3.5 236)"><path d="M3 4 Q3 1 6 2 Q8 0 10 2 Q13 2 12 5 Q14 8 11 9 Q11 12 8 11 Q6 13 4 11 Q1 11 2 8 Q0 6 3 4 Z" fill="#f4f4f4" stroke="#3a4050" stroke-width="1"/></g>
<g transform="translate(3.5 254)"><path d="M1 12 Q3 2 7 7 Q11 12 13 2" fill="none" stroke="#3a4050" stroke-width="1.1"/></g>
<g transform="translate(3.5 271.5)"><ellipse cx="7" cy="7" rx="6" ry="4" fill="#f4f4f4" stroke="#3a4050" stroke-width="1"/><circle cx="7" cy="3" r="1" fill="#3a4050"/><circle cx="7" cy="7" r="0.9" fill="#3a4050"/></g>
<g transform="translate(3.5 289)"><path d="M2 10 Q1 3 7 3 Q13 3 12 10" fill="none" stroke="#3a4050" stroke-width="1.1"/><path d="M2 10 Q7 12 12 10" fill="none" stroke="#3a4050" stroke-width="0.6" stroke-dasharray="1 1"/></g>
<g transform="translate(3.5 308.5)"><path d="M2 3 L6 1 L10 3 L6 6 Z" fill="#f4f4f4" stroke="#3a4050" stroke-width="0.9"/><rect x="1" y="5" width="8" height="6" fill="#f4f4f4" stroke="#3a4050" stroke-width="0.9"/><path d="M7 8 L13 12 L10 12 L11 14" fill="#111"/></g>
<g transform="translate(3.5 324.5)"><rect x="1" y="1.5" width="9" height="7" fill="#f4f4f4" stroke="#3a4050" stroke-width="0.9"/><circle cx="10" cy="9.5" r="2.6" fill="#fff" stroke="#3a4050" stroke-width="0.9"/></g>
<g transform="translate(3.5 341.5)"><circle cx="7" cy="7" r="1.2" fill="#3a4050"/></g>
<g transform="translate(3.5 359)"><rect x="1.5" y="1.5" width="10" height="10" fill="#f4f4f4" stroke="#3a4050" stroke-width="1"/><path d="M1.5 5 L5 1.5 M1.5 9 L9 1.5 M3 11.5 L11.5 3 M7 11.5 L11.5 7" stroke="#3a4050" stroke-width="0.8"/><rect x="0.5" y="0.5" width="2" height="2" fill="#3a4050"/><rect x="10.5" y="10.5" width="2" height="2" fill="#3a4050"/></g>
<g transform="translate(3.5 377)"><rect x="1.5" y="1.5" width="10" height="10" fill="#b8c0cc" stroke="#3a4050" stroke-width="1"/><rect x="3" y="3" width="7" height="7" fill="#7a8494"/><rect x="0.5" y="0.5" width="2" height="2" fill="#3a4050"/><rect x="10.5" y="10.5" width="2" height="2" fill="#3a4050"/></g>
<g transform="translate(3.5 394)"><path d="M1 3 Q1 1 4 1 H9 L12 5 V11 H3 Q1 11 1 9 Z" fill="#f4f4f4" stroke="#3a4050" stroke-width="1"/></g>
<g transform="translate(3.5 412)"><rect x="0.5" y="1.5" width="12" height="10" fill="#f4f4f4" stroke="#3a4050" stroke-width="1"/><rect x="0.5" y="1.5" width="12" height="2.5" fill="#8a94a4"/><path d="M0.5 6.5 H12.5 M0.5 9 H12.5 M4.5 4 V11.5 M8.5 4 V11.5" stroke="#3a4050" stroke-width="0.7"/></g>
<g transform="translate(3.5 430)"><text x="6.5" y="12.5" font-size="15" fill="#2a2e38" text-anchor="middle">A</text></g>
<g transform="translate(3.5 456.5)"><path d="M6.5 1 V12" stroke="#3a4050" stroke-width="1.2"/><path d="M4.5 3 L6.5 0.5 L8.5 3" fill="#3a4050"/><ellipse cx="6.5" cy="7.5" rx="6" ry="2.5" fill="none" stroke="#3a4050" stroke-width="1.1"/><path d="M1 9 L0 7.5 L2.5 7" fill="#3a4050"/></g>
<g transform="translate(3.5 473.5)"><ellipse cx="6.5" cy="7" rx="6.3" ry="3" fill="none" stroke="#3a4050" stroke-width="1" transform="rotate(-25 6.5 7)"/><circle cx="6.5" cy="7" r="4.3" fill="#f4f4f4" stroke="#3a4050" stroke-width="1"/></g>
<g transform="translate(3.5 491)"><circle cx="6.5" cy="7" r="4.6" fill="#f4f4f4" stroke="#3a4050" stroke-width="1"/><circle cx="9.5" cy="3.5" r="2.3" fill="#f4f4f4" stroke="#3a4050" stroke-width="0.9"/><path d="M2 12 L6 8" stroke="#111" stroke-width="1.4"/></g>
<rect x="23" y="105" width="19" height="6" fill="#585858"/><rect x="23" y="105" width="19" height="0.8" fill="#7a7a7a"/><rect x="26.8" y="106.5" width="11.4" height="3" fill="url(#pGrip)"/>
<rect x="23" y="111" width="19" height="394" fill="#ebebeb"/>
<g transform="translate(25.5 113)"><path d="M1.5 1 V12 M12.5 1 V12" stroke="#5a6070" stroke-width="1.8"/><path d="M1.5 4.5 H12.5" stroke="#3a4050" stroke-width="1"/></g>
<g transform="translate(25.5 130.5)"><path d="M1 4 L11 12 M3 1 L0 6 M13 8 L10 13" stroke="#3a4050" stroke-width="1"/></g>
<g transform="translate(25.5 148)"><path d="M2 11 Q2 3 11 2" fill="none" stroke="#3a4050" stroke-width="1.1"/><path d="M4.5 12 Q4.5 6 11 5.5" fill="none" stroke="#555" stroke-width="0.7"/><rect x="1" y="10.5" width="2" height="2" fill="#111"/><rect x="10.5" y="1" width="2" height="2" fill="#111"/></g>
<g transform="translate(25.5 166)"><path d="M5 12 V3 M5 12 H13 M5 8 L9 4 L12 12" fill="none" stroke="#3a4050" stroke-width="0.9"/><text x="0" y="7" font-size="4" fill="#1a6ad8">Y</text><text x="10" y="3.5" font-size="4" fill="#1a6ad8">X</text><circle cx="1.5" cy="11" r="0.9" fill="#1a6ad8"/><circle cx="6" cy="1" r="0.9" fill="#1a6ad8"/></g>
<g transform="translate(25.5 188)"><circle cx="7" cy="7" r="5.8" fill="#f4f4f4" stroke="#3a4050" stroke-width="1.1"/><path d="M7 7 L3.5 3.5 M3.5 3.5 L4 5.5 M3.5 3.5 L5.5 4" stroke="#3a4050" stroke-width="0.9"/></g>
<g transform="translate(25.5 206)"><path d="M2 11 Q4 2 12 3" fill="none" stroke="#3a4050" stroke-width="1"/><path d="M5 10 L8 6 L7 9 L11 4" fill="none" stroke="#3a4050" stroke-width="0.9"/></g>
<g transform="translate(25.5 223)"><circle cx="7" cy="7" r="5.8" fill="#f4f4f4" stroke="#3a4050" stroke-width="1.1"/><path d="M3 3 L11 11" stroke="#3a4050" stroke-width="0.9"/></g>
<g transform="translate(25.5 241)"><path d="M1 12 H13 M1 12 L8 2" stroke="#3a4050" stroke-width="1"/><path d="M5 6 Q9 8 9 12" fill="none" stroke="#3a4050" stroke-width="0.8"/></g>
<g transform="translate(25.5 263)"><path d="M1.5 3 V13 M12.5 3 V13 M1.5 6 H12.5" stroke="#5a6070" stroke-width="1.3"/><path d="M6 6 L4.5 10 H7 L5.5 13 L9.5 8.5 H7 L8.5 6 Z" fill="#f4a010"/></g>
<g transform="translate(25.5 281)"><path d="M1.5 1 V13 M1.5 4 H13 M1.5 9 H9 M9 8 V13 M13 3 V6" stroke="#3a4050" stroke-width="1"/></g>
<g transform="translate(25.5 298)"><path d="M1 3 V13 M7 3 V13 M13 3 V13 M1 6 H13" stroke="#3a4050" stroke-width="1"/></g>
<g transform="translate(25.5 315)"><path d="M6.5 1 V13 M1 6 H12 M2 11 H11" stroke="#3a4050" stroke-width="1"/></g>
<g transform="translate(25.5 333)"><rect x="0.5" y="2.5" width="12" height="8" fill="#111"/><rect x="2" y="4" width="4" height="5" fill="#fff"/><path d="M8 4 V9" stroke="#fff"/></g>
<g transform="translate(25.5 357)"><circle cx="7" cy="7" r="5.5" fill="#f4f4f4" stroke="#3a4050" stroke-width="1"/><path d="M4 7 H10 M7 4 V10" stroke="#3a4050" stroke-width="1"/></g>
<g transform="translate(25.5 373)"><path d="M1 8 L4 4 L6 10 L9 3 L11 8 H13" fill="none" stroke="#3a4050" stroke-width="1.1"/></g>
<g transform="translate(25.5 391)"><path d="M1.5 5 V13 M12.5 5 V13 M1.5 8 H12.5" stroke="#5a6070" stroke-width="1.2"/><path d="M4 6 L11 0.5 L12.5 2 L6 7.5 Z" fill="#e89020" stroke="#a06010" stroke-width="0.5"/></g>
<g transform="translate(25.5 408)"><text x="7" y="8" font-size="9" fill="#2a2e38" text-anchor="middle">A</text><path d="M1.5 7 V13 M12.5 7 V13 M1.5 10.5 H12.5" stroke="#5a6070" stroke-width="1.1"/></g>
<g transform="translate(25.5 431)"><path d="M1.5 1 V9 M12.5 1 V9 M1.5 3 H12.5" stroke="#5a6070" stroke-width="1.3"/><circle cx="7" cy="8" r="2.3" fill="none" stroke="#20a020" stroke-width="1.3"/></g>
<g transform="translate(25.5 449)"><path d="M1.5 6 V13 M12.5 6 V13 M1.5 10 H12.5" stroke="#5a6070" stroke-width="1.2"/><path d="M3 10 Q5 5 12 1 L13 2.5 Q9 8 3 10 Z" fill="#a05018"/></g>
<rect x="25" y="183" width="15" height="1" fill="#cfc6a8"/>
<rect x="25" y="258" width="15" height="1" fill="#cfc6a8"/>
<rect x="25" y="352.6" width="15" height="1" fill="#cfc6a8"/>
<rect x="25" y="427" width="15" height="1" fill="#cfc6a8"/>
<rect x="25" y="484" width="15" height="1" fill="#cfc6a8"/>
<rect x="776" y="105" width="19" height="6" fill="#585858"/><rect x="776" y="105" width="19" height="0.8" fill="#7a7a7a"/><rect x="779.8" y="106.5" width="11.4" height="3" fill="url(#pGrip)"/>
<rect x="776" y="111" width="19" height="114" fill="#ebebeb"/>
<g transform="translate(778.5 113)"><circle cx="10" cy="3.5" r="2.8" fill="#f4f4f4" stroke="#3a4050" stroke-width="1"/><path d="M7 3.5 H5 Q3 3.5 3 7 L2 12" fill="none" stroke="#3a4050" stroke-width="1"/><path d="M0.5 10 L2 13 L3.5 10 Z" fill="#3a4050"/></g>
<g transform="translate(778.5 130.5)"><circle cx="10" cy="3.5" r="2.8" fill="#f4f4f4" stroke="#3a4050" stroke-width="1"/><path d="M7 3.5 H5 Q3 3.5 3 7 L2 12" fill="none" stroke="#3a4050" stroke-width="1"/><path d="M0.5 10 L2 13 L3.5 10 Z" fill="#3a4050"/><path d="M2 1 V5 M0 3 H4" stroke="#111" stroke-width="1"/></g>
<g transform="translate(778.5 148)"><circle cx="10" cy="3.5" r="2.8" fill="#f4f4f4" stroke="#3a4050" stroke-width="1"/><path d="M7 3.5 H5 Q3 3.5 3 7 L2 12" fill="none" stroke="#3a4050" stroke-width="1"/><path d="M0.5 10 L2 13 L3.5 10 Z" fill="#3a4050"/><path d="M0.5 0.5 L4 4 M4 0.5 L0.5 4" stroke="#e02020" stroke-width="1.1"/></g>
<g transform="translate(778.5 170.5)"><circle cx="10" cy="3" r="2.5" fill="#f4f4f4" stroke="#3a4050" stroke-width="1"/><circle cx="10" cy="9" r="2.5" fill="#f4f4f4" stroke="#3a4050" stroke-width="1"/><path d="M7 4 Q3 4 2 9 M7 9 Q4 9 2 12" fill="none" stroke="#3a4050" stroke-width="0.9"/><path d="M13 0 V13" stroke="#3a4050" stroke-width="0.7"/></g>
<g transform="translate(778.5 189)"><circle cx="9.5" cy="3" r="2.5" fill="#f4f4f4" stroke="#3a4050" stroke-width="1"/><circle cx="9.5" cy="8.5" r="2.5" fill="#f4f4f4" stroke="#3a4050" stroke-width="1"/><path d="M7 3 Q4 3 3 8 L2 12" fill="none" stroke="#3a4050" stroke-width="0.9"/></g>
<g transform="translate(778.5 210)"><circle cx="9" cy="3.5" r="2.8" fill="#f4f4f4" stroke="#3a4050" stroke-width="1"/><path d="M6 4 Q3 4 2 12" fill="none" stroke="#3a4050" stroke-width="1"/><path d="M4 12 Q6 8 13 5 L13.5 7 Q10 11 4 12 Z" fill="#b06020"/></g>
<rect x="778" y="166" width="15" height="1" fill="#cfc6a8"/>
<rect x="778" y="206" width="15" height="1" fill="#cfc6a8"/>
<rect x="776" y="225" width="19" height="8" fill="#585858"/><rect x="776" y="225" width="19" height="0.8" fill="#7a7a7a"/><rect x="779.8" y="227.5" width="11.4" height="3" fill="url(#pGrip)"/>
<rect x="776" y="233" width="19" height="71" fill="#ebebeb"/>
<g transform="translate(778.5 236)"><rect x="0.5" y="0.5" width="8" height="6" fill="#f4f4f4" stroke="#3a4050" stroke-width="0.9"/><rect x="3.5" y="4" width="8" height="6" fill="#f4f4f4" stroke="#3a4050" stroke-width="0.9"/><rect x="5.5" y="7" width="8" height="6" fill="#f4f4f4" stroke="#3a4050" stroke-width="0.9"/></g>
<g transform="translate(778.5 254)"><rect x="0.5" y="0.5" width="8" height="6" fill="#f4f4f4" stroke="#3a4050" stroke-width="0.9"/><rect x="3.5" y="4" width="8" height="6" fill="#f4f4f4" stroke="#3a4050" stroke-width="0.9"/><rect x="5.5" y="7" width="8" height="6" fill="#f4f4f4" stroke="#3a4050" stroke-width="0.9"/></g>
<g transform="translate(778.5 271)"><rect x="0.5" y="0.5" width="8" height="6" fill="#f4f4f4" stroke="#3a4050" stroke-width="0.9"/><rect x="3.5" y="4" width="8" height="6" fill="#f4f4f4" stroke="#3a4050" stroke-width="0.9"/><rect x="5.5" y="7" width="8" height="6" fill="#a0a4aa" stroke="#3a4050" stroke-width="0.9"/></g>
<g transform="translate(778.5 287.5)"><rect x="0.5" y="0.5" width="8" height="6" fill="#f4f4f4" stroke="#3a4050" stroke-width="0.9"/><rect x="3.5" y="4" width="8" height="6" fill="#f4f4f4" stroke="#3a4050" stroke-width="0.9"/><rect x="5.5" y="7" width="8" height="6" fill="#a0a4aa" stroke="#3a4050" stroke-width="0.9"/></g>
<rect x="798" y="105" width="20" height="6" fill="#585858"/><rect x="798" y="105" width="20" height="0.8" fill="#7a7a7a"/><rect x="802" y="106.5" width="12" height="3" fill="url(#pGrip)"/>
<rect x="798" y="111" width="20" height="299.5" fill="#ebebeb"/>
<g transform="translate(801 112.5)"><path d="M3 8 L10 1 L13 3 L6 10 Z" fill="#f0c890" stroke="#6a4a20" stroke-width="0.8"/><path d="M3 8 L6 10 L4.5 11.5 L1.5 9.5 Z" fill="#e04010"/><path d="M0.5 13 H13.5" stroke="#555" stroke-width="1"/></g>
<g transform="translate(801 130.05)"><circle cx="3" cy="3.5" r="2.5" fill="#fff" stroke="#3a4050" stroke-width="0.9"/><circle cx="8" cy="9.5" r="2.8" fill="#a8d0f4" stroke="#1a5aa0" stroke-width="1"/><circle cx="10.5" cy="11" r="2.5" fill="#a8d0f4" stroke="#1a5aa0" stroke-width="1"/><path d="M6 3 H10 V6" fill="none" stroke="#111" stroke-width="0.9"/></g>
<g transform="translate(801 147.6)"><path d="M6.5 0.5 V13.5" stroke="#3a4050" stroke-width="1"/><path d="M5 2 V12 H1 Z" fill="#f4f4f4" stroke="#3a4050" stroke-width="0.9"/><path d="M8 2 V12 H12 Z" fill="#8fc0ec" stroke="#1a5aa0" stroke-width="0.9"/></g>
<g transform="translate(801 165.15)"><path d="M2 12 V7 Q2 4 5 4 Q5 1 8 1 Q11 1 11 4 V7 H13 V12 Z" fill="#f4f4f4" stroke="#3a4050" stroke-width="1"/><path d="M2 13.5 H13" stroke="#1a6ad0" stroke-width="1.2"/></g>
<g transform="translate(801 182.7)"><rect x="0.5" y="0.5" width="5" height="5" fill="#fff" stroke="#3a4050" stroke-width="0.9"/><rect x="7.5" y="0.5" width="5" height="5" fill="#a8d0f4" stroke="#1a6ad0" stroke-width="0.9"/><rect x="0.5" y="7.5" width="5" height="5" fill="#a8d0f4" stroke="#1a6ad0" stroke-width="0.9"/><rect x="7.5" y="7.5" width="5" height="5" fill="#a8d0f4" stroke="#1a6ad0" stroke-width="0.9"/></g>
<g transform="translate(801 200.25)"><path d="M7 0.5 V13.5 M0.5 7 H13.5" stroke="#111" stroke-width="1"/><path d="M5 2.5 L7 0 L9 2.5 M5 11.5 L7 14 L9 11.5 M2.5 5 L0 7 L2.5 9 M11.5 5 L14 7 L11.5 9" fill="#111"/><rect x="5" y="5" width="4" height="4" fill="#fff" stroke="#111" stroke-width="0.8"/></g>
<g transform="translate(801 217.8)"><path d="M11 4 A5.2 5.2 0 1 1 6 1.8" fill="none" stroke="#3a4050" stroke-width="1.2"/><path d="M6 0 L9 2 L6 4 Z" fill="#3a4050"/></g>
<g transform="translate(801 235.35)"><rect x="0.5" y="0.5" width="13" height="13" fill="#1a6ad0"/><rect x="2" y="2" width="10" height="10" fill="#fff"/><rect x="2" y="6" width="6" height="6" fill="#f4f4f4" stroke="#3a4050" stroke-width="0.9"/></g>
<g transform="translate(801 252.9)"><path d="M1 1 H8 L12 13 H1 Z" fill="#f4f4f4" stroke="#3a4050" stroke-width="1"/><path d="M8 1 L12 13" stroke="#1a6ad0" stroke-width="1.5"/><path d="M3 8 H8 M6 6 L8 8 L6 10" fill="none" stroke="#111" stroke-width="1"/></g>
<g transform="translate(801 270.45)"><path d="M1 11 L5 7 M8 4 L13 0" stroke="#1a6ad0" stroke-width="1.3"/><path d="M6 7 H13" stroke="#1a6ad0" stroke-width="1" stroke-dasharray="2 1"/></g>
<g transform="translate(801 288)"><path d="M0.5 7 H8" stroke="#1a6ad0" stroke-width="1.2" stroke-dasharray="2 1"/><path d="M9 13 L13 1" stroke="#1a6ad0" stroke-width="1.3"/></g>
<g transform="translate(801 305.55)"><path d="M1 13 V4 H13" fill="none" stroke="#3a4050" stroke-width="1"/><rect x="7" y="2.5" width="3" height="3" fill="#1a6ad0"/></g>
<g transform="translate(801 323.1)"><path d="M1 13 V4 H3 M11 4 H13 V13 M1 13 H13" fill="none" stroke="#3a4050" stroke-width="1"/><rect x="2.5" y="2.5" width="3" height="3" fill="#1a6ad0"/><rect x="9" y="2.5" width="3" height="3" fill="#1a6ad0"/></g>
<g transform="translate(801 340.65)"><path d="M0.5 7 H13.5" stroke="#1a6ad0" stroke-width="1.2"/><path d="M4 4 L6 7 L4 10 M10 4 L8 7 L10 10" fill="none" stroke="#1a6ad0" stroke-width="1"/></g>
<g transform="translate(801 358.2)"><path d="M1 13 V6 L8 1 H13 V13 Z" fill="#f4f4f4" stroke="#3a4050" stroke-width="1"/><path d="M1 6 L8 1" stroke="#1a6ad0" stroke-width="1.3"/></g>
<g transform="translate(801 375.75)"><path d="M1 13 V7 Q1 1 7 1 H13 V13 Z" fill="#f4f4f4" stroke="#3a4050" stroke-width="1"/><path d="M1 7 Q1 1 7 1" fill="none" stroke="#1a6ad0" stroke-width="1.3"/></g>
<g transform="translate(801 393.3)"><path d="M1 5 L5 2 H12 V9 L8 12 H1 Z" fill="#a8d0f4" stroke="#1a5aa0" stroke-width="1"/><path d="M1 5 H8 V12 M8 5 L12 2" fill="none" stroke="#1a5aa0" stroke-width="1"/></g>
<rect x="45" y="104" width="727" height="443" fill="#5a5a5a"/>
<rect x="45" y="103.5" width="727" height="2" fill="#8c8a76"/>
<rect x="45" y="103.5" width="2" height="430" fill="#8c8a76"/>
<rect x="47" y="105" width="710" height="428" fill="#000"/>
<rect x="757" y="105" width="14.5" height="428" fill="#f7f6ef"/>
<rect x="757" y="105" width="1" height="428" fill="#e4e2d8"/>
<rect x="758" y="106" width="12.5" height="13" rx="2" fill="url(#gScrollBtn)"/>
<path d="M761 114.5 L764.3 111 L767.5 114.5" fill="none" stroke="#4d6185" stroke-width="1.6"/>
<rect x="758" y="122" width="12.5" height="14" rx="2" fill="url(#gScrollBtn)"/>
<rect x="761.5" y="126.5" width="5.5" height="0.8" fill="#8aa0c8"/>
<rect x="761.5" y="128.5" width="5.5" height="0.8" fill="#8aa0c8"/>
<rect x="761.5" y="130.5" width="5.5" height="0.8" fill="#8aa0c8"/>
<rect x="758" y="518" width="12.5" height="14" rx="2" fill="url(#gScrollBtn)"/>
<rect x="47" y="533" width="724.5" height="13.2" fill="#efedde"/>
<rect x="47" y="533" width="724.5" height="0.8" fill="#d8d6c8"/>
<rect x="47.5" y="534" width="10.5" height="11.5" fill="#e6e3d0"/>
<rect x="57.8" y="534" width="0.6" height="11.5" fill="#cfcbb8"/>
<rect x="58.8" y="534" width="10.5" height="11.5" fill="#e6e3d0"/>
<rect x="69.1" y="534" width="0.6" height="11.5" fill="#cfcbb8"/>
<rect x="70.1" y="534" width="10.5" height="11.5" fill="#e6e3d0"/>
<rect x="80.4" y="534" width="0.6" height="11.5" fill="#cfcbb8"/>
<rect x="81.4" y="534" width="10.5" height="11.5" fill="#e6e3d0"/>
<rect x="91.7" y="534" width="0.6" height="11.5" fill="#cfcbb8"/>
<path d="M52 536.5 V543.5 M57.5 536.5 L53 540 L57.5 543.5 Z" stroke="#b8b4a0" fill="#c8c4b0" stroke-width="1"/>
<path d="M68.5 536.5 L64 540 L68.5 543.5 Z" fill="#c8c4b0"/>
<path d="M74.5 536.5 L79 540 L74.5 543.5 Z" fill="#c8c4b0"/>
<path d="M85.5 536.5 L90 540 L85.5 543.5 Z M91 536.5 V543.5" fill="#c8c4b0" stroke="#b8b4a0" stroke-width="1"/>
<path d="M92.5 533.5 H125.5 L129.5 546 H96.5 Z" fill="#000"/>
<text x="100" y="543.5" font-size="11" fill="#fafafa" textLength="21" lengthAdjust="spacingAndGlyphs">模型</text>
<path d="M129 546 L133 534.5 H172.5 L176.5 546" fill="none" stroke="#555" stroke-width="0.8"/>
<text x="132.5" y="543.5" font-family="Liberation Serif" font-size="10.5" fill="#111" textLength="33" lengthAdjust="spacingAndGlyphs">Layout1</text>
<path d="M176.5 546 L180.5 534.5 H219.5 L223 546" fill="none" stroke="#555" stroke-width="0.8"/>
<text x="180" y="543.5" font-family="Liberation Serif" font-size="10.5" fill="#111" textLength="33" lengthAdjust="spacingAndGlyphs">Layout2</text>
<rect x="514" y="534" width="243" height="11.5" fill="#fbfbf6"/>
<rect x="514" y="533.5" width="1.5" height="12.5" fill="#d8d6c8"/>
<rect x="515" y="534" width="12" height="11" rx="2" fill="url(#gScrollBtn)"/>
<path d="M522.5 536.5 L519.5 539.5 L522.5 542.5" fill="none" stroke="#4d6185" stroke-width="1.6"/>
<rect x="598" y="534" width="14" height="11" rx="2" fill="url(#gScrollBtn)"/>
<rect x="602" y="537" width="0.8" height="5" fill="#8aa0c8"/>
<rect x="604.5" y="537" width="0.8" height="5" fill="#8aa0c8"/>
<rect x="607" y="537" width="0.8" height="5" fill="#8aa0c8"/>
<rect x="744" y="539" width="12.5" height="7" rx="2" fill="url(#gScrollBtn)"/>
<svg x="47" y="105" width="710" height="428" viewBox="47 105 710 428" overflow="hidden">
<polyline points="47,139.5 59,139.5 59,533" fill="none" stroke="#b4b4b4" stroke-width="1"/>
<polyline points="47,146.5 52,146.5 52,533" fill="none" stroke="#f4f4f4" stroke-width="1.8"/>
<rect x="107.5" y="116.5" width="586" height="413" fill="none" stroke="#c4c4c4" stroke-width="1"/>
<rect x="125" y="123.3" width="561" height="399.7" fill="none" stroke="#f8f8f8" stroke-width="2"/>
<polyline points="757,119.5 733.5,119.5 733.5,533" fill="none" stroke="#b4b4b4" stroke-width="1"/>
<polyline points="757,125.5 751,125.5 751,524.5 757,524.5" fill="none" stroke="#f4f4f4" stroke-width="1.8"/>
<rect x="750" y="525" width="7" height="8" fill="#f4f4f4"/>
<rect x="707.5" y="508" width="10" height="10" fill="none" stroke="#d0d0d0" stroke-width="1.4"/>
<path d="M59.3 458 L59.3 516" stroke="#e8e8e8" stroke-width="1.2"/>
<path d="M55.5 478.5 L59.3 470 L63 478.5 Z" fill="none" stroke="#e8e8e8" stroke-width="1.1"/>
<path d="M57 452 L59.3 456 L62 452 M59.3 456 L59.3 459" fill="none" stroke="#d8d8d8" stroke-width="0.9"/>
<rect x="55.5" y="516" width="8" height="7.5" fill="none" stroke="#e8e8e8" stroke-width="1.1"/>
<path d="M63.5 519.8 L101 519.8" stroke="#e8e8e8" stroke-width="1.1"/>
<path d="M101 516 L109.5 519.8 L101 523.5 Z" fill="none" stroke="#e8e8e8" stroke-width="1.1"/>
<path d="M118 516 L124 523.5 M124 516 L118 523.5" stroke="#d8d8d8" stroke-width="0.9"/>
<line x1="190" y1="178.1" x2="259.4" y2="178.1" stroke="#a0a0a0" stroke-width="0.9"/>
<line x1="220.6" y1="155.4" x2="220.6" y2="211.5" stroke="#a0a0a0" stroke-width="0.9"/>
<line x1="197" y1="155.4" x2="215.3" y2="172.8" stroke="#ddd117" stroke-width="0.9"/>
<line x1="243.4" y1="155.4" x2="225.8" y2="172.8" stroke="#ddd117" stroke-width="0.9"/>
<line x1="197" y1="201.5" x2="215.3" y2="183.3" stroke="#ddd117" stroke-width="0.9"/>
<line x1="243.4" y1="201.5" x2="225.8" y2="183.3" stroke="#ddd117" stroke-width="0.9"/>
<rect x="197" y="155.4" width="46.4" height="46.1" fill="none" stroke="#ddd117" stroke-width="1.3"/>
<clipPath id="hc197"><path d="M197.7 156.1 L218.3 156.1 Q214.1 172.7 197.7 177.1 Z"/></clipPath>
<path d="M197.7 156.1 L218.3 156.1 Q214.1 172.7 197.7 177.1 Z" fill="#6a0000"/>
<g clip-path="url(#hc197)"><rect x="197.7" y="155.4" width="1.6" height="23.7" fill="#ff1a1a"/><rect x="200.8" y="155.4" width="1.6" height="23.7" fill="#ff1a1a"/><rect x="203.9" y="155.4" width="1.6" height="23.7" fill="#ff1a1a"/><rect x="207" y="155.4" width="1.6" height="23.7" fill="#ff1a1a"/><rect x="210.1" y="155.4" width="1.6" height="23.7" fill="#ff1a1a"/><rect x="213.2" y="155.4" width="1.6" height="23.7" fill="#ff1a1a"/><rect x="216.3" y="155.4" width="1.6" height="23.7" fill="#ff1a1a"/><rect x="219.4" y="155.4" width="1.6" height="23.7" fill="#ff1a1a"/><rect x="197" y="156.1" width="23.3" height="1.6" fill="#ff1a1a"/><rect x="197" y="159.2" width="23.3" height="1.6" fill="#ff1a1a"/><rect x="197" y="162.3" width="23.3" height="1.6" fill="#ff1a1a"/><rect x="197" y="165.4" width="23.3" height="1.6" fill="#ff1a1a"/><rect x="197" y="168.5" width="23.3" height="1.6" fill="#ff1a1a"/><rect x="197" y="171.6" width="23.3" height="1.6" fill="#ff1a1a"/><rect x="197" y="174.7" width="23.3" height="1.6" fill="#ff1a1a"/><rect x="197" y="177.8" width="23.3" height="1.6" fill="#ff1a1a"/></g>
<path d="M218.3 156.1 Q214.1 172.7 197.7 177.1" fill="none" stroke="#e8d030" stroke-width="0.8" stroke-dasharray="1.2 1"/>
<line x1="199" y1="160.4" x2="216.3" y2="160.4" stroke="#f0f0f0" stroke-width="0.9" stroke-dasharray="1.2 0.8"/>
<line x1="203" y1="157.4" x2="203" y2="175.1" stroke="#c0c0c0" stroke-width="0.8" stroke-dasharray="1.2 0.8"/>
<rect x="215.3" y="172.8" width="10.5" height="10.5" fill="#ddd117"/>
<rect x="216.9" y="174.4" width="7.3" height="7.3" fill="#f01010"/>
<rect x="218.5" y="176" width="4.1" height="4.1" fill="#000"/>
<rect x="220" y="175.3" width="1.2" height="5.5" fill="#f01010"/>
<rect x="217.8" y="177.5" width="5.5" height="1.2" fill="#f01010"/>
<line x1="243.4" y1="155.4" x2="256" y2="155.4" stroke="#16e016" stroke-width="0.9"/>
<line x1="243.4" y1="201.5" x2="256" y2="201.5" stroke="#16e016" stroke-width="0.9"/>
<line x1="254" y1="154.4" x2="254" y2="202.5" stroke="#16e016" stroke-width="1"/>
<line x1="197" y1="201.5" x2="197" y2="213.5" stroke="#16e016" stroke-width="0.9"/>
<line x1="243.4" y1="201.5" x2="243.4" y2="213.5" stroke="#16e016" stroke-width="0.9"/>
<line x1="196" y1="211.5" x2="244.4" y2="211.5" stroke="#16e016" stroke-width="1"/>
<circle cx="260" cy="178.1" r="3" fill="none" stroke="#16e016" stroke-width="1"/>
<circle cx="220.6" cy="217.5" r="3" fill="none" stroke="#16e016" stroke-width="1"/>
<rect x="252.8" y="163.4" width="2.4" height="4" fill="#f0f0f0"/>
<rect x="252.8" y="189.5" width="2.4" height="4" fill="#f0f0f0"/>
<rect x="207" y="210.3" width="5" height="2.4" fill="#f0f0f0"/>
<rect x="228.4" y="210.3" width="5" height="2.4" fill="#f0f0f0"/>
<rect x="246" y="172.1" width="2.4" height="10" fill="#f0f0f0"/>
<line x1="245" y1="174.1" x2="250" y2="174.1" stroke="#16e016" stroke-width="1.2"/>
<line x1="245" y1="182.1" x2="250" y2="182.1" stroke="#16e016" stroke-width="1.2"/>
<rect x="215.6" y="205.5" width="10" height="2.4" fill="#f0f0f0"/>
<line x1="217.6" y1="203.5" x2="217.6" y2="208.5" stroke="#16e016" stroke-width="1.2"/>
<line x1="223.6" y1="203.5" x2="223.6" y2="208.5" stroke="#16e016" stroke-width="1.2"/>
<circle cx="190.5" cy="153.4" r="1.6" fill="none" stroke="#fff" stroke-width="1"/>
<line x1="192" y1="153.4" x2="202.5" y2="153.4" stroke="#f0f0f0" stroke-width="0.8"/>
<line x1="202.5" y1="153.4" x2="202.5" y2="158.4" stroke="#f0f0f0" stroke-width="0.8"/>
<circle cx="192" cy="160.4" r="1.6" fill="none" stroke="#fff" stroke-width="1"/>
<line x1="193.5" y1="160.4" x2="199" y2="160.4" stroke="#f0f0f0" stroke-width="0.8"/>
<text x="215" y="227.8" font-size="6.8" font-weight="bold" fill="#f4f4f4" textLength="10" lengthAdjust="spacingAndGlyphs">JC-1</text>
<rect x="213.5" y="229" width="13" height="1.5" fill="#f0f0f0"/>
<rect x="228" y="225.3" width="5" height="2" fill="#e8e020"/>
<line x1="413.3" y1="179" x2="487.5" y2="179" stroke="#a0a0a0" stroke-width="0.9"/>
<line x1="446.4" y1="154.1" x2="446.4" y2="213.4" stroke="#a0a0a0" stroke-width="0.9"/>
<line x1="420.3" y1="154.1" x2="441.4" y2="174" stroke="#ddd117" stroke-width="0.9"/>
<line x1="471.5" y1="154.1" x2="451.4" y2="174" stroke="#ddd117" stroke-width="0.9"/>
<line x1="420.3" y1="203.4" x2="441.4" y2="184" stroke="#ddd117" stroke-width="0.9"/>
<line x1="471.5" y1="203.4" x2="451.4" y2="184" stroke="#ddd117" stroke-width="0.9"/>
<rect x="420.3" y="154.1" width="51.2" height="49.3" fill="none" stroke="#ddd117" stroke-width="1.3"/>
<clipPath id="hc420"><path d="M421 154.8 L443.9 154.8 Q439.1 172.6 421 177.3 Z"/></clipPath>
<path d="M421 154.8 L443.9 154.8 Q439.1 172.6 421 177.3 Z" fill="#6a0000"/>
<g clip-path="url(#hc420)"><rect x="421" y="154.1" width="1.6" height="25.2" fill="#ff1a1a"/><rect x="424.1" y="154.1" width="1.6" height="25.2" fill="#ff1a1a"/><rect x="427.2" y="154.1" width="1.6" height="25.2" fill="#ff1a1a"/><rect x="430.3" y="154.1" width="1.6" height="25.2" fill="#ff1a1a"/><rect x="433.4" y="154.1" width="1.6" height="25.2" fill="#ff1a1a"/><rect x="436.5" y="154.1" width="1.6" height="25.2" fill="#ff1a1a"/><rect x="439.6" y="154.1" width="1.6" height="25.2" fill="#ff1a1a"/><rect x="442.7" y="154.1" width="1.6" height="25.2" fill="#ff1a1a"/><rect x="445.8" y="154.1" width="1.6" height="25.2" fill="#ff1a1a"/><rect x="420.3" y="154.8" width="25.6" height="1.6" fill="#ff1a1a"/><rect x="420.3" y="157.9" width="25.6" height="1.6" fill="#ff1a1a"/><rect x="420.3" y="161" width="25.6" height="1.6" fill="#ff1a1a"/><rect x="420.3" y="164.1" width="25.6" height="1.6" fill="#ff1a1a"/><rect x="420.3" y="167.2" width="25.6" height="1.6" fill="#ff1a1a"/><rect x="420.3" y="170.3" width="25.6" height="1.6" fill="#ff1a1a"/><rect x="420.3" y="173.4" width="25.6" height="1.6" fill="#ff1a1a"/><rect x="420.3" y="176.5" width="25.6" height="1.6" fill="#ff1a1a"/><rect x="420.3" y="179.6" width="25.6" height="1.6" fill="#ff1a1a"/></g>
<path d="M443.9 154.8 Q439.1 172.6 421 177.3" fill="none" stroke="#e8d030" stroke-width="0.8" stroke-dasharray="1.2 1"/>
<line x1="422.3" y1="159.1" x2="441.9" y2="159.1" stroke="#f0f0f0" stroke-width="0.9" stroke-dasharray="1.2 0.8"/>
<line x1="426.3" y1="156.1" x2="426.3" y2="175.3" stroke="#c0c0c0" stroke-width="0.8" stroke-dasharray="1.2 0.8"/>
<rect x="441.4" y="174" width="10" height="10" fill="#ddd117"/>
<rect x="443" y="175.6" width="6.8" height="6.8" fill="#f01010"/>
<rect x="444.6" y="177.2" width="3.6" height="3.6" fill="#000"/>
<rect x="445.8" y="176.5" width="1.2" height="5" fill="#f01010"/>
<rect x="443.9" y="178.4" width="5" height="1.2" fill="#f01010"/>
<line x1="471.5" y1="154.1" x2="484" y2="154.1" stroke="#16e016" stroke-width="0.9"/>
<line x1="471.5" y1="203.4" x2="484" y2="203.4" stroke="#16e016" stroke-width="0.9"/>
<line x1="482" y1="153.1" x2="482" y2="204.4" stroke="#16e016" stroke-width="1"/>
<line x1="420.3" y1="203.4" x2="420.3" y2="216.8" stroke="#16e016" stroke-width="0.9"/>
<line x1="471.5" y1="203.4" x2="471.5" y2="216.8" stroke="#16e016" stroke-width="0.9"/>
<line x1="419.3" y1="214.8" x2="472.5" y2="214.8" stroke="#16e016" stroke-width="1"/>
<circle cx="488" cy="179" r="3" fill="none" stroke="#16e016" stroke-width="1"/>
<circle cx="446.4" cy="220.8" r="3" fill="none" stroke="#16e016" stroke-width="1"/>
<rect x="480.8" y="162.1" width="2.4" height="4" fill="#f0f0f0"/>
<rect x="480.8" y="191.4" width="2.4" height="4" fill="#f0f0f0"/>
<rect x="430.3" y="213.6" width="5" height="2.4" fill="#f0f0f0"/>
<rect x="456.5" y="213.6" width="5" height="2.4" fill="#f0f0f0"/>
<rect x="474" y="173" width="2.4" height="10" fill="#f0f0f0"/>
<line x1="473" y1="175" x2="478" y2="175" stroke="#16e016" stroke-width="1.2"/>
<line x1="473" y1="183" x2="478" y2="183" stroke="#16e016" stroke-width="1.2"/>
<rect x="441.4" y="207.4" width="10" height="2.4" fill="#f0f0f0"/>
<line x1="443.4" y1="205.4" x2="443.4" y2="210.4" stroke="#16e016" stroke-width="1.2"/>
<line x1="449.4" y1="205.4" x2="449.4" y2="210.4" stroke="#16e016" stroke-width="1.2"/>
<circle cx="413.8" cy="152.1" r="1.6" fill="none" stroke="#fff" stroke-width="1"/>
<line x1="415.3" y1="152.1" x2="425.8" y2="152.1" stroke="#f0f0f0" stroke-width="0.8"/>
<line x1="425.8" y1="152.1" x2="425.8" y2="157.1" stroke="#f0f0f0" stroke-width="0.8"/>
<circle cx="415.3" cy="159.1" r="1.6" fill="none" stroke="#fff" stroke-width="1"/>
<line x1="416.8" y1="159.1" x2="422.3" y2="159.1" stroke="#f0f0f0" stroke-width="0.8"/>
<text x="441.5" y="230" font-size="6.8" font-weight="bold" fill="#f4f4f4" textLength="10" lengthAdjust="spacingAndGlyphs">JC-1</text>
<rect x="440" y="231.2" width="13" height="1.5" fill="#f0f0f0"/>
<rect x="454.5" y="227.5" width="5" height="2" fill="#e8e020"/>
<line x1="311.7" y1="150.6" x2="311.7" y2="190.5" stroke="#f01010" stroke-width="1.3"/>
<line x1="319" y1="150.6" x2="319" y2="190.5" stroke="#f01010" stroke-width="1.3"/>
<line x1="313.5" y1="162.6" x2="313.5" y2="190.5" stroke="#f01010" stroke-width="0.9"/>
<line x1="317.2" y1="162.6" x2="317.2" y2="190.5" stroke="#f01010" stroke-width="0.9"/>
<polyline points="313.7,171.6 314.2,163.6 316.5,171.6 317,163.6" fill="none" stroke="#ddd117" stroke-width="0.9"/>
<line x1="302.7" y1="166.6" x2="328" y2="166.6" stroke="#ddd117" stroke-width="1"/>
<line x1="313.7" y1="160.6" x2="313.7" y2="180" stroke="#ddd117" stroke-width="0.8"/>
<line x1="317" y1="160.6" x2="317" y2="180" stroke="#ddd117" stroke-width="0.8"/>
<polyline points="292,186.5 310.7,180 320,180 339,186.5" fill="none" stroke="#ddd117" stroke-width="1"/>
<line x1="292" y1="186.5" x2="292" y2="190.5" stroke="#ddd117" stroke-width="1"/>
<line x1="339" y1="186.5" x2="339" y2="190.5" stroke="#ddd117" stroke-width="1"/>
<rect x="292" y="188" width="47" height="2.5" fill="#f01010"/>
<rect x="291" y="190.5" width="49" height="2.2" fill="#ddd117"/>
<rect x="304.7" y="185.5" width="3" height="2.5" fill="#16e016"/>
<rect x="323" y="185.5" width="3" height="2.5" fill="#16e016"/>
<line x1="319" y1="150.6" x2="332" y2="150.6" stroke="#f0f0f0" stroke-width="0.8"/>
<line x1="319" y1="164.6" x2="332" y2="164.6" stroke="#f0f0f0" stroke-width="0.8"/>
<line x1="319" y1="180" x2="332" y2="180" stroke="#f0f0f0" stroke-width="0.8"/>
<line x1="329" y1="150.6" x2="329" y2="180" stroke="#f0f0f0" stroke-width="0.9"/>
<rect x="326" y="154.6" width="2" height="5" fill="#f0f0f0"/>
<rect x="326" y="168.6" width="2" height="6" fill="#f0f0f0"/>
<line x1="332" y1="180" x2="351" y2="180" stroke="#16e016" stroke-width="1"/>
<line x1="349" y1="179" x2="349" y2="192.5" stroke="#16e016" stroke-width="1"/>
<path d="M340 192 L346 185.5 L347 193 Z" fill="#16e016"/>
<rect x="343" y="183.5" width="2.4" height="11" fill="#f0f0f0"/>
<text x="351" y="189" font-size="5.5" font-weight="bold" fill="#f4f4f4" textLength="10" lengthAdjust="spacingAndGlyphs">-1.500</text>
<line x1="350" y1="190" x2="361" y2="190" stroke="#f0f0f0" stroke-width="0.8"/>
<line x1="291" y1="195.5" x2="291" y2="210.7" stroke="#f0f0f0" stroke-width="1.6"/>
<line x1="340" y1="195.5" x2="340" y2="210.7" stroke="#f0f0f0" stroke-width="1.6"/>
<rect x="286" y="196.5" width="12" height="2.4" fill="#f0f0f0"/>
<rect x="306.5" y="194.5" width="12" height="2" fill="#f0f0f0"/>
<line x1="306.5" y1="192.5" x2="306.5" y2="198.5" stroke="#f0f0f0" stroke-width="0.8"/>
<line x1="306.5" y1="198.5" x2="323.5" y2="198.5" stroke="#f0f0f0" stroke-width="0.8"/>
<line x1="292" y1="210.7" x2="339" y2="210.7" stroke="#16e016" stroke-width="1.2"/>
<line x1="315.5" y1="192.5" x2="315.5" y2="212.7" stroke="#16e016" stroke-width="0.9"/>
<rect x="301" y="209.5" width="5" height="2.4" fill="#f0f0f0"/>
<rect x="325" y="209.5" width="5" height="2.4" fill="#f0f0f0"/>
<circle cx="315.5" cy="217.2" r="3" fill="none" stroke="#16e016" stroke-width="1"/>
<text x="311" y="227.8" font-size="6.8" font-weight="bold" fill="#f4f4f4" textLength="10" lengthAdjust="spacingAndGlyphs">JC-1</text>
<rect x="309.5" y="229" width="13" height="1.5" fill="#f0f0f0"/>
<rect x="324" y="225.3" width="5" height="2" fill="#e8e020"/>
<line x1="537.7" y1="147.3" x2="537.7" y2="187.5" stroke="#f01010" stroke-width="1.3"/>
<line x1="545.2" y1="147.3" x2="545.2" y2="187.5" stroke="#f01010" stroke-width="1.3"/>
<line x1="539.5" y1="159.3" x2="539.5" y2="187.5" stroke="#f01010" stroke-width="0.9"/>
<line x1="543.4" y1="159.3" x2="543.4" y2="187.5" stroke="#f01010" stroke-width="0.9"/>
<polyline points="539.7,168.3 540.2,160.3 542.7,168.3 543.2,160.3" fill="none" stroke="#ddd117" stroke-width="0.9"/>
<line x1="528.7" y1="163.3" x2="554.2" y2="163.3" stroke="#ddd117" stroke-width="1"/>
<line x1="539.7" y1="157.3" x2="539.7" y2="176.6" stroke="#ddd117" stroke-width="0.8"/>
<line x1="543.2" y1="157.3" x2="543.2" y2="176.6" stroke="#ddd117" stroke-width="0.8"/>
<polyline points="515.5,183.5 536.7,176.6 546.2,176.6 567.5,183.5" fill="none" stroke="#ddd117" stroke-width="1"/>
<line x1="515.5" y1="183.5" x2="515.5" y2="187.5" stroke="#ddd117" stroke-width="1"/>
<line x1="567.5" y1="183.5" x2="567.5" y2="187.5" stroke="#ddd117" stroke-width="1"/>
<rect x="515.5" y="185" width="52" height="2.5" fill="#f01010"/>
<rect x="514.5" y="187.5" width="54" height="2.2" fill="#ddd117"/>
<rect x="530.7" y="182.5" width="3" height="2.5" fill="#16e016"/>
<rect x="549.2" y="182.5" width="3" height="2.5" fill="#16e016"/>
<line x1="545.2" y1="147.3" x2="557" y2="147.3" stroke="#f0f0f0" stroke-width="0.8"/>
<line x1="545.2" y1="161.3" x2="557" y2="161.3" stroke="#f0f0f0" stroke-width="0.8"/>
<line x1="545.2" y1="176.6" x2="557" y2="176.6" stroke="#f0f0f0" stroke-width="0.8"/>
<line x1="554" y1="147.3" x2="554" y2="176.6" stroke="#f0f0f0" stroke-width="0.9"/>
<rect x="551" y="151.3" width="2" height="5" fill="#f0f0f0"/>
<rect x="551" y="165.3" width="2" height="6" fill="#f0f0f0"/>
<line x1="557" y1="176.6" x2="576" y2="176.6" stroke="#16e016" stroke-width="1"/>
<line x1="574" y1="175.6" x2="574" y2="189.5" stroke="#16e016" stroke-width="1"/>
<path d="M568.5 189 L574.5 182.5 L575.5 190 Z" fill="#16e016"/>
<rect x="571.5" y="180.5" width="2.4" height="11" fill="#f0f0f0"/>
<text x="576" y="186" font-size="5.5" font-weight="bold" fill="#f4f4f4" textLength="10" lengthAdjust="spacingAndGlyphs">-1.500</text>
<line x1="575" y1="187" x2="586" y2="187" stroke="#f0f0f0" stroke-width="0.8"/>
<line x1="514.5" y1="192.5" x2="514.5" y2="205.9" stroke="#f0f0f0" stroke-width="1.6"/>
<line x1="568.5" y1="192.5" x2="568.5" y2="205.9" stroke="#f0f0f0" stroke-width="1.6"/>
<rect x="509.5" y="193.5" width="12" height="2.4" fill="#f0f0f0"/>
<rect x="532.5" y="191.5" width="12" height="2" fill="#f0f0f0"/>
<line x1="532.5" y1="189.5" x2="532.5" y2="195.5" stroke="#f0f0f0" stroke-width="0.8"/>
<line x1="532.5" y1="195.5" x2="549.5" y2="195.5" stroke="#f0f0f0" stroke-width="0.8"/>
<line x1="515.5" y1="205.9" x2="567.5" y2="205.9" stroke="#16e016" stroke-width="1.2"/>
<line x1="541.5" y1="189.5" x2="541.5" y2="207.9" stroke="#16e016" stroke-width="0.9"/>
<rect x="524.5" y="204.7" width="5" height="2.4" fill="#f0f0f0"/>
<rect x="553.5" y="204.7" width="5" height="2.4" fill="#f0f0f0"/>
<circle cx="541.5" cy="212.4" r="3" fill="none" stroke="#16e016" stroke-width="1"/>
<text x="536.6" y="230" font-size="6.8" font-weight="bold" fill="#f4f4f4" textLength="10" lengthAdjust="spacingAndGlyphs">JC-1</text>
<rect x="535.1" y="231.2" width="13" height="1.5" fill="#f0f0f0"/>
<rect x="549.6" y="227.5" width="5" height="2" fill="#e8e020"/>
<line x1="187.5" y1="261" x2="187.5" y2="441" stroke="#a0a0a0" stroke-width="0.8" stroke-dasharray="14 2 1 2"/>
<line x1="213.6" y1="261" x2="213.6" y2="441" stroke="#a0a0a0" stroke-width="0.8" stroke-dasharray="14 2 1 2"/>
<line x1="239.7" y1="261" x2="239.7" y2="441" stroke="#a0a0a0" stroke-width="0.8" stroke-dasharray="14 2 1 2"/>
<line x1="291.8" y1="261" x2="291.8" y2="441" stroke="#a0a0a0" stroke-width="0.8" stroke-dasharray="14 2 1 2"/>
<line x1="335.6" y1="261" x2="335.6" y2="441" stroke="#a0a0a0" stroke-width="0.8" stroke-dasharray="14 2 1 2"/>
<line x1="379.5" y1="261" x2="379.5" y2="441" stroke="#a0a0a0" stroke-width="0.8" stroke-dasharray="14 2 1 2"/>
<line x1="423.4" y1="261" x2="423.4" y2="441" stroke="#a0a0a0" stroke-width="0.8" stroke-dasharray="14 2 1 2"/>
<line x1="467.3" y1="261" x2="467.3" y2="441" stroke="#a0a0a0" stroke-width="0.8" stroke-dasharray="14 2 1 2"/>
<line x1="510.8" y1="261" x2="510.8" y2="441" stroke="#a0a0a0" stroke-width="0.8" stroke-dasharray="14 2 1 2"/>
<line x1="518" y1="261" x2="518" y2="441" stroke="#a0a0a0" stroke-width="0.8" stroke-dasharray="14 2 1 2"/>
<line x1="570.2" y1="261" x2="570.2" y2="441" stroke="#a0a0a0" stroke-width="0.8" stroke-dasharray="14 2 1 2"/>
<line x1="596.1" y1="261" x2="596.1" y2="441" stroke="#a0a0a0" stroke-width="0.8" stroke-dasharray="14 2 1 2"/>
<line x1="622" y1="261" x2="622" y2="441" stroke="#a0a0a0" stroke-width="0.8" stroke-dasharray="14 2 1 2"/>
<line x1="180" y1="268.4" x2="632" y2="268.4" stroke="#a0a0a0" stroke-width="0.8" stroke-dasharray="14 2 1 2"/>
<line x1="180" y1="314.6" x2="632" y2="314.6" stroke="#a0a0a0" stroke-width="0.8" stroke-dasharray="14 2 1 2"/>
<line x1="180" y1="335.3" x2="632" y2="335.3" stroke="#a0a0a0" stroke-width="0.8" stroke-dasharray="14 2 1 2"/>
<line x1="180" y1="381.3" x2="632" y2="381.3" stroke="#a0a0a0" stroke-width="0.8" stroke-dasharray="14 2 1 2"/>
<line x1="180" y1="427.3" x2="632" y2="427.3" stroke="#a0a0a0" stroke-width="0.8" stroke-dasharray="14 2 1 2"/>
<line x1="180" y1="278.3" x2="632" y2="278.3" stroke="#a0a0a0" stroke-width="0.8"/>
<rect x="175.4" y="257.4" width="24.2" height="22.3" fill="none" stroke="#ddd117" stroke-width="1.3"/>
<rect x="203.3" y="258.6" width="20.4" height="19.9" fill="none" stroke="#9c8f10" stroke-width="1.3"/>
<rect x="228" y="257.4" width="24" height="22.3" fill="none" stroke="#ddd117" stroke-width="1.3"/>
<rect x="280" y="257.4" width="24" height="22.3" fill="none" stroke="#ddd117" stroke-width="1.3"/>
<rect x="323.4" y="257.4" width="24.2" height="22.3" fill="none" stroke="#ddd117" stroke-width="1.3"/>
<rect x="367.4" y="257.4" width="24.1" height="22.3" fill="none" stroke="#ddd117" stroke-width="1.3"/>
<rect x="411.7" y="257.4" width="23.8" height="22.3" fill="none" stroke="#ddd117" stroke-width="1.3"/>
<rect x="455.6" y="257.4" width="23.2" height="22.3" fill="none" stroke="#ddd117" stroke-width="1.3"/>
<rect x="500" y="255.7" width="29.2" height="25.8" fill="none" stroke="#ddd117" stroke-width="1.3"/>
<rect x="558.4" y="257.4" width="23.6" height="22.3" fill="none" stroke="#ddd117" stroke-width="1.3"/>
<rect x="586.3" y="259" width="19.6" height="19" fill="none" stroke="#ddd117" stroke-width="1.3"/>
<rect x="610" y="257.4" width="24" height="22.3" fill="none" stroke="#ddd117" stroke-width="1.3"/>
<rect x="172.2" y="302.2" width="30.4" height="45.8" fill="none" stroke="#ddd117" stroke-width="1.3"/>
<rect x="225.4" y="302.2" width="29.2" height="45.8" fill="none" stroke="#ddd117" stroke-width="1.3"/>
<rect x="277.3" y="302.2" width="29.1" height="45.8" fill="none" stroke="#ddd117" stroke-width="1.3"/>
<rect x="321" y="302.2" width="29" height="45.8" fill="none" stroke="#ddd117" stroke-width="1.3"/>
<rect x="365" y="302.2" width="29.4" height="45.8" fill="none" stroke="#ddd117" stroke-width="1.3"/>
<rect x="408.5" y="302.2" width="30.1" height="45.8" fill="none" stroke="#ddd117" stroke-width="1.3"/>
<rect x="452.7" y="302.2" width="29.3" height="45.8" fill="none" stroke="#ddd117" stroke-width="1.3"/>
<rect x="497.6" y="302.2" width="32.2" height="45.8" fill="none" stroke="#ddd117" stroke-width="1.3"/>
<rect x="555" y="302.2" width="29.4" height="45.8" fill="none" stroke="#ddd117" stroke-width="1.3"/>
<rect x="607.2" y="302.2" width="29.8" height="45.8" fill="none" stroke="#ddd117" stroke-width="1.3"/>
<rect x="203.4" y="304.3" width="20.2" height="20.4" fill="none" stroke="#ddd117" stroke-width="1.3"/>
<rect x="586.3" y="304" width="19.6" height="20.6" fill="none" stroke="#ddd117" stroke-width="1.3"/>
<rect x="175.2" y="369.2" width="24.2" height="23.8" fill="none" stroke="#ddd117" stroke-width="1.3"/>
<rect x="226.2" y="368.4" width="26" height="25.1" fill="none" stroke="#ddd117" stroke-width="1.3"/>
<rect x="280.2" y="369" width="23.5" height="23.8" fill="none" stroke="#ddd117" stroke-width="1.3"/>
<rect x="323.4" y="369" width="24.2" height="23.8" fill="none" stroke="#ddd117" stroke-width="1.3"/>
<rect x="367.4" y="369" width="24.1" height="23.8" fill="none" stroke="#ddd117" stroke-width="1.3"/>
<rect x="411.7" y="369" width="23.8" height="23.8" fill="none" stroke="#ddd117" stroke-width="1.3"/>
<rect x="455.6" y="369" width="23.2" height="23.8" fill="none" stroke="#ddd117" stroke-width="1.3"/>
<rect x="499.5" y="368.2" width="29.7" height="25.2" fill="none" stroke="#ddd117" stroke-width="1.3"/>
<rect x="557" y="368.2" width="25.8" height="25.6" fill="none" stroke="#ddd117" stroke-width="1.3"/>
<rect x="610" y="369" width="24" height="24" fill="none" stroke="#ddd117" stroke-width="1.3"/>
<rect x="175.1" y="415.1" width="24.4" height="24" fill="none" stroke="#ddd117" stroke-width="1.3"/>
<rect x="228.4" y="415.1" width="23.2" height="24" fill="none" stroke="#ddd117" stroke-width="1.3"/>
<rect x="280" y="415.1" width="24" height="24" fill="none" stroke="#ddd117" stroke-width="1.3"/>
<rect x="506.3" y="415.3" width="22.7" height="23.6" fill="none" stroke="#ddd117" stroke-width="1.3"/>
<rect x="558" y="415.3" width="24" height="23.6" fill="none" stroke="#ddd117" stroke-width="1.3"/>
<rect x="610" y="415.3" width="24" height="23.6" fill="none" stroke="#ddd117" stroke-width="1.3"/>
<rect x="185.5" y="266.7" width="438.5" height="3.4" fill="#26eef6"/>
<line x1="185.5" y1="268.4" x2="624" y2="268.4" stroke="#689c9c" stroke-width="0.9"/>
<rect x="185.5" y="312.9" width="438.5" height="3.4" fill="#26eef6"/>
<line x1="185.5" y1="314.6" x2="624" y2="314.6" stroke="#689c9c" stroke-width="0.9"/>
<rect x="185.5" y="333.6" width="438.5" height="3.4" fill="#26eef6"/>
<line x1="185.5" y1="335.3" x2="624" y2="335.3" stroke="#689c9c" stroke-width="0.9"/>
<rect x="185.5" y="379.6" width="438.5" height="3.4" fill="#26eef6"/>
<line x1="185.5" y1="381.3" x2="624" y2="381.3" stroke="#689c9c" stroke-width="0.9"/>
<rect x="185.5" y="425.6" width="108.3" height="3.4" fill="#26eef6"/>
<line x1="185.5" y1="427.3" x2="293.8" y2="427.3" stroke="#689c9c" stroke-width="0.9"/>
<rect x="516" y="425.6" width="108" height="3.4" fill="#26eef6"/>
<line x1="516" y1="427.3" x2="624" y2="427.3" stroke="#689c9c" stroke-width="0.9"/>
<rect x="185.5" y="266.4" width="1.5" height="162.9" fill="#26eef6"/>
<rect x="188.1" y="266.4" width="1.5" height="162.9" fill="#26eef6"/>
<rect x="187" y="266.4" width="1.1" height="162.9" fill="#3a7c80"/>
<rect x="211.6" y="266.4" width="1.5" height="50.2" fill="#26eef6"/>
<rect x="214.2" y="266.4" width="1.5" height="50.2" fill="#26eef6"/>
<rect x="213.1" y="266.4" width="1.1" height="50.2" fill="#3a7c80"/>
<rect x="237.7" y="266.4" width="1.5" height="162.9" fill="#26eef6"/>
<rect x="240.3" y="266.4" width="1.5" height="162.9" fill="#26eef6"/>
<rect x="239.2" y="266.4" width="1.1" height="162.9" fill="#3a7c80"/>
<rect x="289.8" y="266.4" width="1.5" height="162.9" fill="#26eef6"/>
<rect x="292.4" y="266.4" width="1.5" height="162.9" fill="#26eef6"/>
<rect x="291.3" y="266.4" width="1.1" height="162.9" fill="#3a7c80"/>
<rect x="333.6" y="266.4" width="1.5" height="116.9" fill="#26eef6"/>
<rect x="336.2" y="266.4" width="1.5" height="116.9" fill="#26eef6"/>
<rect x="335.1" y="266.4" width="1.1" height="116.9" fill="#3a7c80"/>
<rect x="377.5" y="266.4" width="1.5" height="116.9" fill="#26eef6"/>
<rect x="380.1" y="266.4" width="1.5" height="116.9" fill="#26eef6"/>
<rect x="379" y="266.4" width="1.1" height="116.9" fill="#3a7c80"/>
<rect x="421.4" y="266.4" width="1.5" height="116.9" fill="#26eef6"/>
<rect x="424" y="266.4" width="1.5" height="116.9" fill="#26eef6"/>
<rect x="422.9" y="266.4" width="1.1" height="116.9" fill="#3a7c80"/>
<rect x="465.3" y="266.4" width="1.5" height="116.9" fill="#26eef6"/>
<rect x="467.9" y="266.4" width="1.5" height="116.9" fill="#26eef6"/>
<rect x="466.8" y="266.4" width="1.1" height="116.9" fill="#3a7c80"/>
<rect x="508.8" y="266.4" width="1.5" height="116.9" fill="#26eef6"/>
<rect x="511.4" y="266.4" width="1.5" height="116.9" fill="#26eef6"/>
<rect x="510.3" y="266.4" width="1.1" height="116.9" fill="#3a7c80"/>
<rect x="516" y="266.4" width="1.5" height="162.9" fill="#26eef6"/>
<rect x="518.6" y="266.4" width="1.5" height="162.9" fill="#26eef6"/>
<rect x="517.5" y="266.4" width="1.1" height="162.9" fill="#3a7c80"/>
<rect x="568.2" y="266.4" width="1.5" height="162.9" fill="#26eef6"/>
<rect x="570.8" y="266.4" width="1.5" height="162.9" fill="#26eef6"/>
<rect x="569.7" y="266.4" width="1.1" height="162.9" fill="#3a7c80"/>
<rect x="594.1" y="266.4" width="1.5" height="50.2" fill="#26eef6"/>
<rect x="596.7" y="266.4" width="1.5" height="50.2" fill="#26eef6"/>
<rect x="595.6" y="266.4" width="1.1" height="50.2" fill="#3a7c80"/>
<rect x="620" y="266.4" width="1.5" height="162.9" fill="#26eef6"/>
<rect x="622.6" y="266.4" width="1.5" height="162.9" fill="#26eef6"/>
<rect x="621.5" y="266.4" width="1.1" height="162.9" fill="#3a7c80"/>
<rect x="184.7" y="265.9" width="5.6" height="5" fill="#26eef6"/>
<rect x="184.7" y="312.1" width="5.6" height="5" fill="#26eef6"/>
<rect x="184.7" y="332.8" width="5.6" height="5" fill="#26eef6"/>
<rect x="184.7" y="378.8" width="5.6" height="5" fill="#26eef6"/>
<rect x="184.7" y="424.8" width="5.6" height="5" fill="#26eef6"/>
<rect x="210.8" y="265.9" width="5.6" height="5" fill="#26eef6"/>
<rect x="210.8" y="312.1" width="5.6" height="5" fill="#26eef6"/>
<rect x="236.9" y="265.9" width="5.6" height="5" fill="#26eef6"/>
<rect x="236.9" y="312.1" width="5.6" height="5" fill="#26eef6"/>
<rect x="236.9" y="332.8" width="5.6" height="5" fill="#26eef6"/>
<rect x="236.9" y="378.8" width="5.6" height="5" fill="#26eef6"/>
<rect x="236.9" y="424.8" width="5.6" height="5" fill="#26eef6"/>
<rect x="289" y="265.9" width="5.6" height="5" fill="#26eef6"/>
<rect x="289" y="312.1" width="5.6" height="5" fill="#26eef6"/>
<rect x="289" y="332.8" width="5.6" height="5" fill="#26eef6"/>
<rect x="289" y="378.8" width="5.6" height="5" fill="#26eef6"/>
<rect x="289" y="424.8" width="5.6" height="5" fill="#26eef6"/>
<rect x="332.8" y="265.9" width="5.6" height="5" fill="#26eef6"/>
<rect x="332.8" y="312.1" width="5.6" height="5" fill="#26eef6"/>
<rect x="332.8" y="332.8" width="5.6" height="5" fill="#26eef6"/>
<rect x="332.8" y="378.8" width="5.6" height="5" fill="#26eef6"/>
<rect x="376.7" y="265.9" width="5.6" height="5" fill="#26eef6"/>
<rect x="376.7" y="312.1" width="5.6" height="5" fill="#26eef6"/>
<rect x="376.7" y="332.8" width="5.6" height="5" fill="#26eef6"/>
<rect x="376.7" y="378.8" width="5.6" height="5" fill="#26eef6"/>
<rect x="420.6" y="265.9" width="5.6" height="5" fill="#26eef6"/>
<rect x="420.6" y="312.1" width="5.6" height="5" fill="#26eef6"/>
<rect x="420.6" y="332.8" width="5.6" height="5" fill="#26eef6"/>
<rect x="420.6" y="378.8" width="5.6" height="5" fill="#26eef6"/>
<rect x="464.5" y="265.9" width="5.6" height="5" fill="#26eef6"/>
<rect x="464.5" y="312.1" width="5.6" height="5" fill="#26eef6"/>
<rect x="464.5" y="332.8" width="5.6" height="5" fill="#26eef6"/>
<rect x="464.5" y="378.8" width="5.6" height="5" fill="#26eef6"/>
<rect x="508" y="265.9" width="5.6" height="5" fill="#26eef6"/>
<rect x="508" y="312.1" width="5.6" height="5" fill="#26eef6"/>
<rect x="508" y="332.8" width="5.6" height="5" fill="#26eef6"/>
<rect x="508" y="378.8" width="5.6" height="5" fill="#26eef6"/>
<rect x="515.2" y="265.9" width="5.6" height="5" fill="#26eef6"/>
<rect x="515.2" y="312.1" width="5.6" height="5" fill="#26eef6"/>
<rect x="515.2" y="332.8" width="5.6" height="5" fill="#26eef6"/>
<rect x="515.2" y="378.8" width="5.6" height="5" fill="#26eef6"/>
<rect x="515.2" y="424.8" width="5.6" height="5" fill="#26eef6"/>
<rect x="567.4" y="265.9" width="5.6" height="5" fill="#26eef6"/>
<rect x="567.4" y="312.1" width="5.6" height="5" fill="#26eef6"/>
<rect x="567.4" y="332.8" width="5.6" height="5" fill="#26eef6"/>
<rect x="567.4" y="378.8" width="5.6" height="5" fill="#26eef6"/>
<rect x="567.4" y="424.8" width="5.6" height="5" fill="#26eef6"/>
<rect x="593.3" y="265.9" width="5.6" height="5" fill="#26eef6"/>
<rect x="593.3" y="312.1" width="5.6" height="5" fill="#26eef6"/>
<rect x="619.2" y="265.9" width="5.6" height="5" fill="#26eef6"/>
<rect x="619.2" y="312.1" width="5.6" height="5" fill="#26eef6"/>
<rect x="619.2" y="332.8" width="5.6" height="5" fill="#26eef6"/>
<rect x="619.2" y="378.8" width="5.6" height="5" fill="#26eef6"/>
<rect x="619.2" y="424.8" width="5.6" height="5" fill="#26eef6"/>
<polyline points="190.3,263.4  200.1,253.2 214.2,253.2" fill="none" stroke="#d0d0d0" stroke-width="0.8"/>
<text x="203.5" y="252.1" font-size="6.2" font-weight="bold" fill="#ffffff" textLength="8.3" lengthAdjust="spacingAndGlyphs">JC-1</text>
<polyline points="216.4,263.4  226.2,253.2 240.3,253.2" fill="none" stroke="#d0d0d0" stroke-width="0.8"/>
<text x="229.6" y="252.1" font-size="6.2" font-weight="bold" fill="#ffffff" textLength="8.3" lengthAdjust="spacingAndGlyphs">JC-1</text>
<polyline points="242.5,263.4  252.3,253.2 266.4,253.2" fill="none" stroke="#d0d0d0" stroke-width="0.8"/>
<text x="255.7" y="252.1" font-size="6.2" font-weight="bold" fill="#ffffff" textLength="8.3" lengthAdjust="spacingAndGlyphs">JC-1</text>
<polyline points="294.6,263.4  304.4,253.2 318.5,253.2" fill="none" stroke="#d0d0d0" stroke-width="0.8"/>
<text x="307.8" y="252.1" font-size="6.2" font-weight="bold" fill="#ffffff" textLength="8.3" lengthAdjust="spacingAndGlyphs">JC-1</text>
<polyline points="338.4,263.4  348.2,253.2 362.3,253.2" fill="none" stroke="#d0d0d0" stroke-width="0.8"/>
<text x="351.6" y="252.1" font-size="6.2" font-weight="bold" fill="#ffffff" textLength="8.3" lengthAdjust="spacingAndGlyphs">JC-1</text>
<polyline points="382.3,263.4  392.1,253.2 406.2,253.2" fill="none" stroke="#d0d0d0" stroke-width="0.8"/>
<text x="395.5" y="252.1" font-size="6.2" font-weight="bold" fill="#ffffff" textLength="8.3" lengthAdjust="spacingAndGlyphs">JC-1</text>
<polyline points="426.2,263.4  436,253.2 450.1,253.2" fill="none" stroke="#d0d0d0" stroke-width="0.8"/>
<text x="439.4" y="252.1" font-size="6.2" font-weight="bold" fill="#ffffff" textLength="8.3" lengthAdjust="spacingAndGlyphs">JC-1</text>
<polyline points="470.1,263.4  479.9,253.2 494,253.2" fill="none" stroke="#d0d0d0" stroke-width="0.8"/>
<text x="483.3" y="252.1" font-size="6.2" font-weight="bold" fill="#ffffff" textLength="8.3" lengthAdjust="spacingAndGlyphs">JC-1</text>
<polyline points="520.8,263.4  530.6,253.2 544.7,253.2" fill="none" stroke="#d0d0d0" stroke-width="0.8"/>
<text x="534" y="252.1" font-size="6.2" font-weight="bold" fill="#ffffff" textLength="8.3" lengthAdjust="spacingAndGlyphs">JC-1</text>
<polyline points="573,263.4  582.8,253.2 596.9,253.2" fill="none" stroke="#d0d0d0" stroke-width="0.8"/>
<text x="586.2" y="252.1" font-size="6.2" font-weight="bold" fill="#ffffff" textLength="8.3" lengthAdjust="spacingAndGlyphs">JC-1</text>
<polyline points="598.9,263.4  608.7,253.2 622.8,253.2" fill="none" stroke="#d0d0d0" stroke-width="0.8"/>
<text x="612.1" y="252.1" font-size="6.2" font-weight="bold" fill="#ffffff" textLength="8.3" lengthAdjust="spacingAndGlyphs">JC-1</text>
<polyline points="624.8,263.4  634.6,253.2 648.7,253.2" fill="none" stroke="#d0d0d0" stroke-width="0.8"/>
<text x="638" y="252.1" font-size="6.2" font-weight="bold" fill="#ffffff" textLength="8.3" lengthAdjust="spacingAndGlyphs">JC-1</text>
<polyline points="190.3,309.6  200.1,303.6 214.2,303.6" fill="none" stroke="#d0d0d0" stroke-width="0.8"/>
<text x="203.5" y="302.5" font-size="6.2" font-weight="bold" fill="#ffffff" textLength="8.3" lengthAdjust="spacingAndGlyphs">JC-1</text>
<polyline points="216.4,309.6  226.2,299.6 240.3,299.6" fill="none" stroke="#d0d0d0" stroke-width="0.8"/>
<text x="229.6" y="298.5" font-size="6.2" font-weight="bold" fill="#ffffff" textLength="8.3" lengthAdjust="spacingAndGlyphs">JC-1</text>
<polyline points="242.5,309.6  252.3,303.6 266.4,303.6" fill="none" stroke="#d0d0d0" stroke-width="0.8"/>
<text x="255.7" y="302.5" font-size="6.2" font-weight="bold" fill="#ffffff" textLength="8.3" lengthAdjust="spacingAndGlyphs">JC-1</text>
<polyline points="294.6,309.6  304.4,303.6 318.5,303.6" fill="none" stroke="#d0d0d0" stroke-width="0.8"/>
<text x="307.8" y="302.5" font-size="6.2" font-weight="bold" fill="#ffffff" textLength="8.3" lengthAdjust="spacingAndGlyphs">JC-1</text>
<polyline points="338.4,309.6  348.2,303.6 362.3,303.6" fill="none" stroke="#d0d0d0" stroke-width="0.8"/>
<text x="351.6" y="302.5" font-size="6.2" font-weight="bold" fill="#ffffff" textLength="8.3" lengthAdjust="spacingAndGlyphs">JC-1</text>
<polyline points="382.3,309.6  392.1,303.6 406.2,303.6" fill="none" stroke="#d0d0d0" stroke-width="0.8"/>
<text x="395.5" y="302.5" font-size="6.2" font-weight="bold" fill="#ffffff" textLength="8.3" lengthAdjust="spacingAndGlyphs">JC-1</text>
<polyline points="426.2,309.6  436,303.6 450.1,303.6" fill="none" stroke="#d0d0d0" stroke-width="0.8"/>
<text x="439.4" y="302.5" font-size="6.2" font-weight="bold" fill="#ffffff" textLength="8.3" lengthAdjust="spacingAndGlyphs">JC-1</text>
<polyline points="470.1,309.6  479.9,303.6 494,303.6" fill="none" stroke="#d0d0d0" stroke-width="0.8"/>
<text x="483.3" y="302.5" font-size="6.2" font-weight="bold" fill="#ffffff" textLength="8.3" lengthAdjust="spacingAndGlyphs">JC-1</text>
<polyline points="520.8,309.6  530.6,303.6 544.7,303.6" fill="none" stroke="#d0d0d0" stroke-width="0.8"/>
<text x="534" y="302.5" font-size="6.2" font-weight="bold" fill="#ffffff" textLength="8.3" lengthAdjust="spacingAndGlyphs">JC-1</text>
<polyline points="573,309.6  582.8,303.6 596.9,303.6" fill="none" stroke="#d0d0d0" stroke-width="0.8"/>
<text x="586.2" y="302.5" font-size="6.2" font-weight="bold" fill="#ffffff" textLength="8.3" lengthAdjust="spacingAndGlyphs">JC-1</text>
<polyline points="598.9,309.6  608.7,303.6 622.8,303.6" fill="none" stroke="#d0d0d0" stroke-width="0.8"/>
<text x="612.1" y="302.5" font-size="6.2" font-weight="bold" fill="#ffffff" textLength="8.3" lengthAdjust="spacingAndGlyphs">JC-1</text>
<polyline points="624.8,309.6  634.6,303.6 648.7,303.6" fill="none" stroke="#d0d0d0" stroke-width="0.8"/>
<text x="638" y="302.5" font-size="6.2" font-weight="bold" fill="#ffffff" textLength="8.3" lengthAdjust="spacingAndGlyphs">JC-1</text>
<polyline points="190.3,376.3  200.1,366.1 214.2,366.1" fill="none" stroke="#d0d0d0" stroke-width="0.8"/>
<text x="203.5" y="365" font-size="6.2" font-weight="bold" fill="#ffffff" textLength="8.3" lengthAdjust="spacingAndGlyphs">JC-1</text>
<polyline points="242.5,376.3  252.3,366.1 266.4,366.1" fill="none" stroke="#d0d0d0" stroke-width="0.8"/>
<text x="255.7" y="365" font-size="6.2" font-weight="bold" fill="#ffffff" textLength="8.3" lengthAdjust="spacingAndGlyphs">JC-1</text>
<polyline points="294.6,376.3  304.4,366.1 318.5,366.1" fill="none" stroke="#d0d0d0" stroke-width="0.8"/>
<text x="307.8" y="365" font-size="6.2" font-weight="bold" fill="#ffffff" textLength="8.3" lengthAdjust="spacingAndGlyphs">JC-1</text>
<polyline points="338.4,376.3  348.2,366.1 362.3,366.1" fill="none" stroke="#d0d0d0" stroke-width="0.8"/>
<text x="351.6" y="365" font-size="6.2" font-weight="bold" fill="#ffffff" textLength="8.3" lengthAdjust="spacingAndGlyphs">JC-1</text>
<polyline points="382.3,376.3  392.1,366.1 406.2,366.1" fill="none" stroke="#d0d0d0" stroke-width="0.8"/>
<text x="395.5" y="365" font-size="6.2" font-weight="bold" fill="#ffffff" textLength="8.3" lengthAdjust="spacingAndGlyphs">JC-1</text>
<polyline points="426.2,376.3  436,366.1 450.1,366.1" fill="none" stroke="#d0d0d0" stroke-width="0.8"/>
<text x="439.4" y="365" font-size="6.2" font-weight="bold" fill="#ffffff" textLength="8.3" lengthAdjust="spacingAndGlyphs">JC-1</text>
<polyline points="470.1,376.3  479.9,366.1 494,366.1" fill="none" stroke="#d0d0d0" stroke-width="0.8"/>
<text x="483.3" y="365" font-size="6.2" font-weight="bold" fill="#ffffff" textLength="8.3" lengthAdjust="spacingAndGlyphs">JC-1</text>
<polyline points="520.8,376.3  530.6,366.1 544.7,366.1" fill="none" stroke="#d0d0d0" stroke-width="0.8"/>
<text x="534" y="365" font-size="6.2" font-weight="bold" fill="#ffffff" textLength="8.3" lengthAdjust="spacingAndGlyphs">JC-1</text>
<polyline points="573,376.3  582.8,366.1 596.9,366.1" fill="none" stroke="#d0d0d0" stroke-width="0.8"/>
<text x="586.2" y="365" font-size="6.2" font-weight="bold" fill="#ffffff" textLength="8.3" lengthAdjust="spacingAndGlyphs">JC-1</text>
<polyline points="624.8,376.3  634.6,366.1 648.7,366.1" fill="none" stroke="#d0d0d0" stroke-width="0.8"/>
<text x="638" y="365" font-size="6.2" font-weight="bold" fill="#ffffff" textLength="8.3" lengthAdjust="spacingAndGlyphs">JC-1</text>
<polyline points="190.3,422.3  200.1,412.1 214.2,412.1" fill="none" stroke="#d0d0d0" stroke-width="0.8"/>
<text x="203.5" y="411" font-size="6.2" font-weight="bold" fill="#ffffff" textLength="8.3" lengthAdjust="spacingAndGlyphs">JC-1</text>
<polyline points="242.5,422.3  252.3,412.1 266.4,412.1" fill="none" stroke="#d0d0d0" stroke-width="0.8"/>
<text x="255.7" y="411" font-size="6.2" font-weight="bold" fill="#ffffff" textLength="8.3" lengthAdjust="spacingAndGlyphs">JC-1</text>
<polyline points="294.6,422.3  304.4,412.1 318.5,412.1" fill="none" stroke="#d0d0d0" stroke-width="0.8"/>
<text x="307.8" y="411" font-size="6.2" font-weight="bold" fill="#ffffff" textLength="8.3" lengthAdjust="spacingAndGlyphs">JC-1</text>
<polyline points="520.8,422.3  530.6,412.1 544.7,412.1" fill="none" stroke="#d0d0d0" stroke-width="0.8"/>
<text x="534" y="411" font-size="6.2" font-weight="bold" fill="#ffffff" textLength="8.3" lengthAdjust="spacingAndGlyphs">JC-1</text>
<polyline points="573,422.3  582.8,412.1 596.9,412.1" fill="none" stroke="#d0d0d0" stroke-width="0.8"/>
<text x="586.2" y="411" font-size="6.2" font-weight="bold" fill="#ffffff" textLength="8.3" lengthAdjust="spacingAndGlyphs">JC-1</text>
<polyline points="624.8,422.3  634.6,412.1 648.7,412.1" fill="none" stroke="#d0d0d0" stroke-width="0.8"/>
<text x="638" y="411" font-size="6.2" font-weight="bold" fill="#ffffff" textLength="8.3" lengthAdjust="spacingAndGlyphs">JC-1</text>
<line x1="154.1" y1="268.4" x2="154.1" y2="427.3" stroke="#16e016" stroke-width="1"/>
<line x1="158.6" y1="268.4" x2="158.6" y2="427.3" stroke="#16e016" stroke-width="1"/>
<line x1="149" y1="268.4" x2="163.8" y2="268.4" stroke="#16e016" stroke-width="1"/>
<circle cx="146.3" cy="268.4" r="2.7" fill="none" stroke="#16e016" stroke-width="1"/>
<rect x="145.5" y="267.2" width="1.6" height="2.4" fill="#f0f0f0"/>
<line x1="149" y1="314.6" x2="163.8" y2="314.6" stroke="#16e016" stroke-width="1"/>
<circle cx="146.3" cy="314.6" r="2.7" fill="none" stroke="#16e016" stroke-width="1"/>
<rect x="145.5" y="313.4" width="1.6" height="2.4" fill="#f0f0f0"/>
<line x1="149" y1="335.3" x2="163.8" y2="335.3" stroke="#16e016" stroke-width="1"/>
<circle cx="146.3" cy="335.3" r="2.7" fill="none" stroke="#16e016" stroke-width="1"/>
<rect x="145.5" y="334.1" width="1.6" height="2.4" fill="#f0f0f0"/>
<line x1="149" y1="381.3" x2="163.8" y2="381.3" stroke="#16e016" stroke-width="1"/>
<circle cx="146.3" cy="381.3" r="2.7" fill="none" stroke="#16e016" stroke-width="1"/>
<rect x="145.5" y="380.1" width="1.6" height="2.4" fill="#f0f0f0"/>
<line x1="149" y1="427.3" x2="163.8" y2="427.3" stroke="#16e016" stroke-width="1"/>
<circle cx="146.3" cy="427.3" r="2.7" fill="none" stroke="#16e016" stroke-width="1"/>
<rect x="145.5" y="426.1" width="1.6" height="2.4" fill="#f0f0f0"/>
<rect x="155.3" y="289.7" width="2.6" height="4" fill="#f0f0f0"/>
<rect x="155.3" y="323" width="2.6" height="4" fill="#f0f0f0"/>
<rect x="155.3" y="356" width="2.6" height="4" fill="#f0f0f0"/>
<rect x="155.3" y="402" width="2.6" height="4" fill="#f0f0f0"/>
<rect x="150.8" y="346" width="2.6" height="5" fill="#f0f0f0"/>
<line x1="187.5" y1="447.7" x2="622" y2="447.7" stroke="#16e016" stroke-width="1"/>
<line x1="187.5" y1="452.6" x2="622" y2="452.6" stroke="#16e016" stroke-width="1"/>
<line x1="187.5" y1="442.8" x2="187.5" y2="457.8" stroke="#16e016" stroke-width="1"/>
<circle cx="187.5" cy="460.6" r="2.7" fill="none" stroke="#16e016" stroke-width="1"/>
<rect x="186.7" y="459.4" width="1.6" height="2.4" fill="#f0f0f0"/>
<line x1="239.7" y1="442.8" x2="239.7" y2="457.8" stroke="#16e016" stroke-width="1"/>
<circle cx="239.7" cy="460.6" r="2.7" fill="none" stroke="#16e016" stroke-width="1"/>
<rect x="238.9" y="459.4" width="1.6" height="2.4" fill="#f0f0f0"/>
<line x1="291.8" y1="442.8" x2="291.8" y2="457.8" stroke="#16e016" stroke-width="1"/>
<circle cx="291.8" cy="460.6" r="2.7" fill="none" stroke="#16e016" stroke-width="1"/>
<rect x="291" y="459.4" width="1.6" height="2.4" fill="#f0f0f0"/>
<line x1="335.6" y1="442.8" x2="335.6" y2="457.8" stroke="#16e016" stroke-width="1"/>
<circle cx="335.6" cy="460.6" r="2.7" fill="none" stroke="#16e016" stroke-width="1"/>
<rect x="334.8" y="459.4" width="1.6" height="2.4" fill="#f0f0f0"/>
<line x1="379.5" y1="442.8" x2="379.5" y2="457.8" stroke="#16e016" stroke-width="1"/>
<circle cx="379.5" cy="460.6" r="2.7" fill="none" stroke="#16e016" stroke-width="1"/>
<rect x="378.7" y="459.4" width="1.6" height="2.4" fill="#f0f0f0"/>
<line x1="423.4" y1="442.8" x2="423.4" y2="457.8" stroke="#16e016" stroke-width="1"/>
<circle cx="423.4" cy="460.6" r="2.7" fill="none" stroke="#16e016" stroke-width="1"/>
<rect x="422.6" y="459.4" width="1.6" height="2.4" fill="#f0f0f0"/>
<line x1="467.3" y1="442.8" x2="467.3" y2="457.8" stroke="#16e016" stroke-width="1"/>
<circle cx="467.3" cy="460.6" r="2.7" fill="none" stroke="#16e016" stroke-width="1"/>
<rect x="466.5" y="459.4" width="1.6" height="2.4" fill="#f0f0f0"/>
<line x1="510.8" y1="442.8" x2="510.8" y2="457.8" stroke="#16e016" stroke-width="1"/>
<circle cx="510.8" cy="460.6" r="2.7" fill="none" stroke="#16e016" stroke-width="1"/>
<rect x="510" y="459.4" width="1.6" height="2.4" fill="#f0f0f0"/>
<line x1="518" y1="442.8" x2="518" y2="457.8" stroke="#16e016" stroke-width="1"/>
<circle cx="518" cy="460.6" r="2.7" fill="none" stroke="#16e016" stroke-width="1"/>
<rect x="517.2" y="459.4" width="1.6" height="2.4" fill="#f0f0f0"/>
<line x1="570.2" y1="442.8" x2="570.2" y2="457.8" stroke="#16e016" stroke-width="1"/>
<circle cx="570.2" cy="460.6" r="2.7" fill="none" stroke="#16e016" stroke-width="1"/>
<rect x="569.4" y="459.4" width="1.6" height="2.4" fill="#f0f0f0"/>
<line x1="622" y1="442.8" x2="622" y2="457.8" stroke="#16e016" stroke-width="1"/>
<circle cx="622" cy="460.6" r="2.7" fill="none" stroke="#16e016" stroke-width="1"/>
<rect x="621.2" y="459.4" width="1.6" height="2.4" fill="#f0f0f0"/>
<rect x="211.6" y="445.2" width="4" height="1.6" fill="#f0f0f0"/>
<rect x="263.8" y="445.2" width="4" height="1.6" fill="#f0f0f0"/>
<rect x="311.7" y="445.2" width="4" height="1.6" fill="#f0f0f0"/>
<rect x="355.6" y="445.2" width="4" height="1.6" fill="#f0f0f0"/>
<rect x="399.4" y="445.2" width="4" height="1.6" fill="#f0f0f0"/>
<rect x="443.4" y="445.2" width="4" height="1.6" fill="#f0f0f0"/>
<rect x="487.1" y="445.2" width="4" height="1.6" fill="#f0f0f0"/>
<rect x="538.5" y="445.2" width="4" height="1.6" fill="#f0f0f0"/>
<rect x="594.1" y="445.2" width="4" height="1.6" fill="#f0f0f0"/>
<rect x="396" y="449.8" width="8" height="1.6" fill="#f0f0f0"/>
<line x1="203.3" y1="255.4" x2="223.7" y2="255.4" stroke="#16e016" stroke-width="1"/>
<line x1="203.3" y1="253.4" x2="203.3" y2="257.4" stroke="#16e016" stroke-width="1"/>
<line x1="223.7" y1="253.4" x2="223.7" y2="257.4" stroke="#16e016" stroke-width="1"/>
<rect x="207.4" y="252.2" width="4.1" height="1.8" fill="#f0f0f0"/>
<rect x="215.5" y="252.2" width="4.1" height="1.8" fill="#f0f0f0"/>
<line x1="213.5" y1="253.9" x2="213.5" y2="256.9" stroke="#16e016" stroke-width="1"/>
<line x1="200.2" y1="258" x2="200.2" y2="279" stroke="#16e016" stroke-width="1"/>
<line x1="198.2" y1="258" x2="202.2" y2="258" stroke="#16e016" stroke-width="1"/>
<line x1="198.2" y1="279" x2="202.2" y2="279" stroke="#16e016" stroke-width="1"/>
<rect x="196.8" y="261.8" width="2.4" height="3.6" fill="#f0f0f0"/>
<rect x="196.8" y="271.4" width="2.4" height="3.6" fill="#f0f0f0"/>
<line x1="198.7" y1="268.5" x2="201.7" y2="268.5" stroke="#16e016" stroke-width="1"/>
<line x1="172.2" y1="298.3" x2="202.6" y2="298.3" stroke="#16e016" stroke-width="1"/>
<line x1="172.2" y1="296.3" x2="172.2" y2="300.3" stroke="#16e016" stroke-width="1"/>
<line x1="202.6" y1="296.3" x2="202.6" y2="300.3" stroke="#16e016" stroke-width="1"/>
<rect x="178.3" y="295.1" width="6.1" height="1.8" fill="#f0f0f0"/>
<rect x="190.4" y="295.1" width="6.1" height="1.8" fill="#f0f0f0"/>
<line x1="187.4" y1="296.8" x2="187.4" y2="299.8" stroke="#16e016" stroke-width="1"/>
<line x1="169.5" y1="302.2" x2="169.5" y2="348" stroke="#16e016" stroke-width="1"/>
<line x1="167.5" y1="302.2" x2="171.5" y2="302.2" stroke="#16e016" stroke-width="1"/>
<line x1="167.5" y1="348" x2="171.5" y2="348" stroke="#16e016" stroke-width="1"/>
<rect x="166.1" y="310.4" width="2.4" height="7.8" fill="#f0f0f0"/>
<rect x="166.1" y="331.5" width="2.4" height="7.8" fill="#f0f0f0"/>
<line x1="168" y1="325.1" x2="171" y2="325.1" stroke="#16e016" stroke-width="1"/>
<line x1="226.2" y1="365.5" x2="252.2" y2="365.5" stroke="#16e016" stroke-width="1"/>
<line x1="226.2" y1="363.5" x2="226.2" y2="367.5" stroke="#16e016" stroke-width="1"/>
<line x1="252.2" y1="363.5" x2="252.2" y2="367.5" stroke="#16e016" stroke-width="1"/>
<rect x="231.4" y="362.3" width="5.2" height="1.8" fill="#f0f0f0"/>
<rect x="241.8" y="362.3" width="5.2" height="1.8" fill="#f0f0f0"/>
<line x1="239.2" y1="364" x2="239.2" y2="367" stroke="#16e016" stroke-width="1"/>
<line x1="222.5" y1="368.4" x2="222.5" y2="393.5" stroke="#16e016" stroke-width="1"/>
<line x1="220.5" y1="368.4" x2="224.5" y2="368.4" stroke="#16e016" stroke-width="1"/>
<line x1="220.5" y1="393.5" x2="224.5" y2="393.5" stroke="#16e016" stroke-width="1"/>
<rect x="219.1" y="372.9" width="2.4" height="4.3" fill="#f0f0f0"/>
<rect x="219.1" y="384.5" width="2.4" height="4.3" fill="#f0f0f0"/>
<line x1="221" y1="380.9" x2="224" y2="380.9" stroke="#16e016" stroke-width="1"/>
<line x1="175.1" y1="411.2" x2="199.5" y2="411.2" stroke="#16e016" stroke-width="1"/>
<line x1="175.1" y1="409.2" x2="175.1" y2="413.2" stroke="#16e016" stroke-width="1"/>
<line x1="199.5" y1="409.2" x2="199.5" y2="413.2" stroke="#16e016" stroke-width="1"/>
<rect x="180" y="408" width="4.9" height="1.8" fill="#f0f0f0"/>
<rect x="189.7" y="408" width="4.9" height="1.8" fill="#f0f0f0"/>
<line x1="187.3" y1="409.7" x2="187.3" y2="412.7" stroke="#16e016" stroke-width="1"/>
<line x1="172.2" y1="415.1" x2="172.2" y2="439.1" stroke="#16e016" stroke-width="1"/>
<line x1="170.2" y1="415.1" x2="174.2" y2="415.1" stroke="#16e016" stroke-width="1"/>
<line x1="170.2" y1="439.1" x2="174.2" y2="439.1" stroke="#16e016" stroke-width="1"/>
<rect x="168.8" y="419.4" width="2.4" height="4.1" fill="#f0f0f0"/>
<rect x="168.8" y="430.5" width="2.4" height="4.1" fill="#f0f0f0"/>
<line x1="170.7" y1="427.1" x2="173.7" y2="427.1" stroke="#16e016" stroke-width="1"/>
<line x1="497.6" y1="298" x2="529.8" y2="298" stroke="#16e016" stroke-width="1"/>
<line x1="497.6" y1="296" x2="497.6" y2="300" stroke="#16e016" stroke-width="1"/>
<line x1="529.8" y1="296" x2="529.8" y2="300" stroke="#16e016" stroke-width="1"/>
<rect x="504" y="294.8" width="6.4" height="1.8" fill="#f0f0f0"/>
<rect x="516.9" y="294.8" width="6.4" height="1.8" fill="#f0f0f0"/>
<line x1="513.7" y1="296.5" x2="513.7" y2="299.5" stroke="#16e016" stroke-width="1"/>
<line x1="495" y1="302.2" x2="495" y2="348" stroke="#16e016" stroke-width="1"/>
<line x1="493" y1="302.2" x2="497" y2="302.2" stroke="#16e016" stroke-width="1"/>
<line x1="493" y1="348" x2="497" y2="348" stroke="#16e016" stroke-width="1"/>
<rect x="491.6" y="310.4" width="2.4" height="7.8" fill="#f0f0f0"/>
<rect x="491.6" y="331.5" width="2.4" height="7.8" fill="#f0f0f0"/>
<line x1="493.5" y1="325.1" x2="496.5" y2="325.1" stroke="#16e016" stroke-width="1"/>
<line x1="499.5" y1="364.5" x2="529.2" y2="364.5" stroke="#16e016" stroke-width="1"/>
<line x1="499.5" y1="362.5" x2="499.5" y2="366.5" stroke="#16e016" stroke-width="1"/>
<line x1="529.2" y1="362.5" x2="529.2" y2="366.5" stroke="#16e016" stroke-width="1"/>
<rect x="505.4" y="361.3" width="5.9" height="1.8" fill="#f0f0f0"/>
<rect x="517.3" y="361.3" width="5.9" height="1.8" fill="#f0f0f0"/>
<line x1="514.4" y1="363" x2="514.4" y2="366" stroke="#16e016" stroke-width="1"/>
<line x1="496.5" y1="368.2" x2="496.5" y2="393.4" stroke="#16e016" stroke-width="1"/>
<line x1="494.5" y1="368.2" x2="498.5" y2="368.2" stroke="#16e016" stroke-width="1"/>
<line x1="494.5" y1="393.4" x2="498.5" y2="393.4" stroke="#16e016" stroke-width="1"/>
<rect x="493.1" y="372.7" width="2.4" height="4.3" fill="#f0f0f0"/>
<rect x="493.1" y="384.3" width="2.4" height="4.3" fill="#f0f0f0"/>
<line x1="495" y1="380.8" x2="498" y2="380.8" stroke="#16e016" stroke-width="1"/>
<line x1="610" y1="365.5" x2="634" y2="365.5" stroke="#16e016" stroke-width="1"/>
<line x1="610" y1="363.5" x2="610" y2="367.5" stroke="#16e016" stroke-width="1"/>
<line x1="634" y1="363.5" x2="634" y2="367.5" stroke="#16e016" stroke-width="1"/>
<rect x="614.8" y="362.3" width="4.8" height="1.8" fill="#f0f0f0"/>
<rect x="624.4" y="362.3" width="4.8" height="1.8" fill="#f0f0f0"/>
<line x1="622" y1="364" x2="622" y2="367" stroke="#16e016" stroke-width="1"/>
<line x1="607" y1="369" x2="607" y2="393" stroke="#16e016" stroke-width="1"/>
<line x1="605" y1="369" x2="609" y2="369" stroke="#16e016" stroke-width="1"/>
<line x1="605" y1="393" x2="609" y2="393" stroke="#16e016" stroke-width="1"/>
<rect x="603.6" y="373.3" width="2.4" height="4.1" fill="#f0f0f0"/>
<rect x="603.6" y="384.4" width="2.4" height="4.1" fill="#f0f0f0"/>
<line x1="605.5" y1="381" x2="608.5" y2="381" stroke="#16e016" stroke-width="1"/>
<text x="396" y="266" font-size="5.5" font-weight="bold" fill="#40f0ff" textLength="11" lengthAdjust="spacingAndGlyphs">JCL1(2)</text>
<text x="396" y="311.5" font-size="5.5" font-weight="bold" fill="#40f0ff" textLength="11" lengthAdjust="spacingAndGlyphs">JCL1(2)</text>
<text x="396" y="332" font-size="5.5" font-weight="bold" fill="#40f0ff" textLength="11" lengthAdjust="spacingAndGlyphs">JCL1(2)</text>
<text x="396" y="378" font-size="5.5" font-weight="bold" fill="#40f0ff" textLength="11" lengthAdjust="spacingAndGlyphs">JCL1(2)</text>
<text x="262.5" y="423.5" font-size="5.5" font-weight="bold" fill="#40f0ff" textLength="11" lengthAdjust="spacingAndGlyphs">JCL1(2)</text>
<text x="539" y="423.5" font-size="5.5" font-weight="bold" fill="#40f0ff" textLength="11" lengthAdjust="spacingAndGlyphs">JCL1(2)</text>
<text transform="translate(184.5 362) rotate(-90)" font-size="5.5" font-weight="bold" fill="#40f0ff" textLength="11" lengthAdjust="spacingAndGlyphs">JCL1(2)</text>
<text transform="translate(236.5 362) rotate(-90)" font-size="5.5" font-weight="bold" fill="#40f0ff" textLength="11" lengthAdjust="spacingAndGlyphs">JCL1(2)</text>
<text transform="translate(289 362) rotate(-90)" font-size="5.5" font-weight="bold" fill="#40f0ff" textLength="11" lengthAdjust="spacingAndGlyphs">JCL1(2)</text>
<text transform="translate(332.5 362) rotate(-90)" font-size="5.5" font-weight="bold" fill="#40f0ff" textLength="11" lengthAdjust="spacingAndGlyphs">JCL1(2)</text>
<text transform="translate(376.5 362) rotate(-90)" font-size="5.5" font-weight="bold" fill="#40f0ff" textLength="11" lengthAdjust="spacingAndGlyphs">JCL1(2)</text>
<text transform="translate(420 362) rotate(-90)" font-size="5.5" font-weight="bold" fill="#40f0ff" textLength="11" lengthAdjust="spacingAndGlyphs">JCL1(2)</text>
<text transform="translate(464 362) rotate(-90)" font-size="5.5" font-weight="bold" fill="#40f0ff" textLength="11" lengthAdjust="spacingAndGlyphs">JCL1(2)</text>
<text transform="translate(508 362) rotate(-90)" font-size="5.5" font-weight="bold" fill="#40f0ff" textLength="11" lengthAdjust="spacingAndGlyphs">JCL1(2)</text>
<text transform="translate(524.5 362) rotate(-90)" font-size="5.5" font-weight="bold" fill="#40f0ff" textLength="11" lengthAdjust="spacingAndGlyphs">JCL1(2)</text>
<text transform="translate(568 362) rotate(-90)" font-size="5.5" font-weight="bold" fill="#40f0ff" textLength="11" lengthAdjust="spacingAndGlyphs">JCL1(2)</text>
<text transform="translate(619 362) rotate(-90)" font-size="5.5" font-weight="bold" fill="#40f0ff" textLength="11" lengthAdjust="spacingAndGlyphs">JCL1(2)</text>
<text transform="translate(365 489.6) scale(0.58 1)" font-size="10" fill="#f0f0f0" textLength="92" lengthAdjust="spacing">基础平面布置图</text>
<rect x="365" y="490.6" width="54.5" height="1.8" fill="#a0a0a0"/>
<text x="419.5" y="489.8" font-size="8" fill="#e8e020" textLength="19.5" lengthAdjust="spacingAndGlyphs">1:100</text>
<g>
<path d="M335.5 312 Q339 327 354 326.5 Q370 325 374 307.5 Q367 320.5 354 320.5 Q342 320.5 335.5 312 Z" fill="#acacac"/>
<path d="M338.8 295.5 Q346 287 359 288.2 Q347 290 338.8 295.5 Z" fill="#acacac"/>
<text x="329.5" y="314.2" font-size="25" font-weight="bold" font-style="italic" fill="#acacac" stroke="#acacac" stroke-width="1.4" textLength="48" lengthAdjust="spacingAndGlyphs">MF</text>
<path d="M362.8 285.8 L364 289.4 L367.6 290.6 L364 291.8 L362.8 295.4 L361.6 291.8 L358 290.6 L361.6 289.4 Z" fill="#c4c4c4"/>
<text transform="translate(377.5 312.5) skewX(-11)" font-size="28" font-weight="bold" fill="#acacac" stroke="#acacac" stroke-width="1.5" stroke-linejoin="round" textLength="107" lengthAdjust="spacing">沐风网</text>
<text x="380" y="324" font-size="11" font-weight="bold" fill="#acacac" textLength="108" lengthAdjust="spacingAndGlyphs">www.mfcad.com</text>
</g>
</svg>
<rect x="724.5" y="526.5" width="93" height="12.5" fill="#0c0c58"/>
<rect x="724.5" y="526.5" width="93" height="12.5" fill="none" stroke="#c8c070" stroke-width="1"/>
<text x="726" y="537.5" font-size="11" fill="#e6e2b0" textLength="65" lengthAdjust="spacingAndGlyphs">选择注释对象或</text>
<rect x="805" y="529" width="8" height="7" fill="#d8e0f0"/>
<path d="M806.5 531 H811.5 M809 530 V534 M807 532 L809 534.5 L811 532" stroke="#0c0c58" fill="none" stroke-width="0.9"/>
<rect x="0" y="546" width="820" height="3.5" fill="#585858"/>
<rect x="0" y="549.5" width="12" height="46.5" fill="#686868"/>
<rect x="1" y="551" width="9" height="3" fill="url(#pGrip)"/>
<rect x="12" y="549.5" width="808" height="46.5" fill="#cce7cd"/>
<rect x="12" y="581.5" width="741" height="1" fill="#aab6a4"/>
<text x="14" y="560.5" font-size="12" fill="#1e1e1e" textLength="30" lengthAdjust="spacingAndGlyphs">命令:</text>
<text x="14" y="573.5" font-size="12" fill="#1e1e1e" textLength="30" lengthAdjust="spacingAndGlyphs">命令:</text>
<text x="52" y="573.5" font-family="Liberation Mono" font-size="11.5" fill="#1e1e1e" textLength="45" lengthAdjust="spacingAndGlyphs">_ddedit</text>
<text x="14" y="593.5" font-size="12" fill="#1e1e1e" textLength="88" lengthAdjust="spacingAndGlyphs">选择注释对象或</text>
<text x="111.5" y="593.5" font-size="12" fill="#1e1e1e" textLength="32" lengthAdjust="spacingAndGlyphs">[放弃</text>
<text x="144" y="593" font-family="Liberation Mono" font-size="10" fill="#1e1e1e" textLength="17" lengthAdjust="spacingAndGlyphs">(U)</text>
<text x="161" y="593.5" font-family="Liberation Mono" font-size="11" fill="#1e1e1e" textLength="11" lengthAdjust="spacingAndGlyphs">]:</text>
<rect x="808" y="550.5" width="11" height="12" rx="2" fill="url(#gScrollBtn)"/>
<path d="M810.8 558.5 L813.5 555.5 L816.2 558.5" fill="none" stroke="#3d5280" stroke-width="1.5"/>
<rect x="808" y="567.5" width="11" height="12" rx="2" fill="url(#gScrollBtn)"/>
<path d="M810.8 572 L813.5 575 L816.2 572" fill="none" stroke="#3d5280" stroke-width="1.5"/>
<rect x="753" y="582.5" width="55" height="13.5" fill="#f9f9f4"/>
<rect x="753.5" y="583" width="11" height="12" rx="2" fill="url(#gScrollBtn)"/>
<path d="M761 586.5 L758 589.5 L761 592.5" fill="none" stroke="#3d5280" stroke-width="1.5"/>
<rect x="765" y="583" width="12" height="12" rx="2" fill="url(#gScrollBtn)"/>
<rect x="796" y="583" width="11" height="12" rx="2" fill="url(#gScrollBtn)"/>
<path d="M800 586.5 L803 589.5 L800 592.5" fill="none" stroke="#3d5280" stroke-width="1.5"/>
<rect x="808" y="582.5" width="12" height="13.5" fill="#ecead8"/>
<rect x="0" y="596" width="820" height="17" fill="url(#gStatus)"/>
<rect x="0" y="596" width="820" height="1" fill="#5a5a5a"/>
<rect x="0" y="613" width="820" height="2" fill="#3b7fd8"/>
<text x="10" y="609.5" font-family="Liberation Mono" font-size="10.5" fill="#1a1a1a" textLength="77" lengthAdjust="spacingAndGlyphs">177706, 2746 , 0</text>
<rect x="122.8" y="597.5" width="16.2" height="15" fill="url(#gBtnGray)"/>
<rect x="139" y="597.5" width="0.8" height="15" fill="#6a6a6a"/>
<rect x="139" y="597.5" width="16.2" height="15" fill="url(#gBtnGray)"/>
<rect x="155.2" y="597.5" width="0.8" height="15" fill="#6a6a6a"/>
<rect x="155.5" y="597.5" width="16.2" height="15" fill="url(#gBtnGray)"/>
<rect x="171.7" y="597.5" width="0.8" height="15" fill="#6a6a6a"/>
<rect x="172.5" y="597.5" width="16.2" height="15" fill="url(#gBtnBlue)"/>
<rect x="188.7" y="597.5" width="0.8" height="15" fill="#6a6a6a"/>
<rect x="189.5" y="597.5" width="16.2" height="15" fill="url(#gBtnBlue)"/>
<rect x="205.7" y="597.5" width="0.8" height="15" fill="#6a6a6a"/>
<rect x="206.5" y="597.5" width="16.2" height="15" fill="url(#gBtnBlue)"/>
<rect x="222.7" y="597.5" width="0.8" height="15" fill="#6a6a6a"/>
<rect x="223.5" y="597.5" width="16.2" height="15" fill="url(#gBtnBlue)"/>
<rect x="239.7" y="597.5" width="0.8" height="15" fill="#6a6a6a"/>
<rect x="240.5" y="597.5" width="16.2" height="15" fill="url(#gBtnBlue)"/>
<rect x="256.7" y="597.5" width="0.8" height="15" fill="#6a6a6a"/>
<rect x="257.5" y="597.5" width="16.2" height="15" fill="url(#gBtnBlue)"/>
<rect x="273.7" y="597.5" width="0.8" height="15" fill="#6a6a6a"/>
<rect x="274.5" y="597.5" width="16.2" height="15" fill="url(#gBtnGray)"/>
<rect x="290.7" y="597.5" width="0.8" height="15" fill="#6a6a6a"/>
<rect x="125.5" y="600.5" width="1" height="1" fill="#222"/><rect x="125.5" y="602.5" width="1" height="1" fill="#222"/><rect x="125.5" y="604.5" width="1" height="1" fill="#222"/><rect x="125.5" y="606.5" width="1" height="1" fill="#222"/><rect x="127.5" y="600.5" width="1" height="1" fill="#222"/><rect x="127.5" y="602.5" width="1" height="1" fill="#222"/><rect x="127.5" y="604.5" width="1" height="1" fill="#222"/><rect x="127.5" y="606.5" width="1" height="1" fill="#222"/><rect x="129.5" y="600.5" width="1" height="1" fill="#222"/><rect x="129.5" y="602.5" width="1" height="1" fill="#222"/><rect x="129.5" y="604.5" width="1" height="1" fill="#222"/><rect x="129.5" y="606.5" width="1" height="1" fill="#222"/><rect x="131.5" y="600.5" width="1" height="1" fill="#222"/><rect x="131.5" y="602.5" width="1" height="1" fill="#222"/><rect x="131.5" y="604.5" width="1" height="1" fill="#222"/><rect x="131.5" y="606.5" width="1" height="1" fill="#222"/><path d="M134.5 600 V610" stroke="#111" stroke-width="1.4"/><path d="M124.5 610.5 H135" stroke="#333" stroke-width="0.8"/>
<rect x="141.5" y="600" width="11" height="10" fill="none" stroke="#222" stroke-width="1"/><path d="M144 600 V610 M147 600 V610 M150 600 V610 M141.5 602.5 H152.5 M141.5 605 H152.5 M141.5 607.5 H152.5" stroke="#222" stroke-width="0.7"/>
<path d="M158.5 599.5 V610 H169" fill="none" stroke="#333" stroke-width="1.2"/>
<circle cx="179" cy="606" r="3.5" fill="none" stroke="#222" stroke-width="1"/><path d="M176 608 L184 601 M177 606.5 H186" stroke="#222" stroke-width="1"/>
<rect x="192.5" y="600.5" width="11" height="10.5" rx="1" fill="#fff" stroke="#333" stroke-width="1"/><circle cx="193" cy="600.5" r="1.8" fill="none" stroke="#e05020" stroke-width="0.9"/>
<path d="M209.5 609 L217 602 M209.5 609 H218" stroke="#222" stroke-width="1.1"/>
<path d="M227 600 V610 H237 M227 610 L235 602" fill="none" stroke="#222" stroke-width="1"/><path d="M233 599 L236.5 602 L233.5 605 L237 605" fill="#f0a010"/><path d="M234 599 L238 603 L233 606" fill="#f4b010"/>
<path d="M244 604 H252 M247 601 V607" stroke="#111" stroke-width="1.3"/><rect x="249" y="605" width="5.5" height="4" fill="#fff" stroke="#111" stroke-width="0.9"/>
<path d="M261 605 H271 M266 600.5 V610" stroke="#111" stroke-width="2"/>
<rect x="278.5" y="600.5" width="8" height="10" rx="1" fill="#eee" stroke="#333" stroke-width="0.9"/><path d="M280.5 603 H284.5 M280.5 605.5 H284.5 M280.5 608 H284.5" stroke="#333" stroke-width="0.7"/>
<rect x="297" y="597.5" width="1" height="15" fill="#5a5a5a"/>
<rect x="172" y="597.5" width="0.6" height="15" fill="#7a9ab0"/>
<rect x="500.5" y="597.5" width="17" height="15" fill="url(#gBtnGray)"/>
<rect x="517.5" y="597.5" width="0.8" height="15" fill="#6a6a6a"/>
<rect x="518.5" y="597.5" width="17" height="15" fill="url(#gBtnGray)"/>
<rect x="535.5" y="597.5" width="0.8" height="15" fill="#6a6a6a"/>
<path d="M504 600.5 H513 V609.5 H504 Z M506 602 L512 608" fill="#f4f4f4" stroke="#222" stroke-width="0.9"/><path d="M503 611 H514" stroke="#222" stroke-width="1.2"/>
<rect x="521" y="600" width="5.5" height="6" fill="#fff" stroke="#222" stroke-width="0.9"/><rect x="527.5" y="600" width="5.5" height="6" fill="#fff" stroke="#222" stroke-width="0.9"/><path d="M520.5 609.5 H533.5" stroke="#222" stroke-width="1.5"/>
<rect x="498.5" y="597" width="1" height="16" fill="#5a5a5a"/>
<rect x="543" y="597" width="1" height="16" fill="#5a5a5a"/>
<rect x="548" y="597.5" width="17" height="15" fill="url(#gBtnGray)"/>
<rect x="565" y="597.5" width="0.8" height="15" fill="#6a6a6a"/>
<rect x="566" y="597.5" width="17" height="15" fill="url(#gBtnGray)"/>
<rect x="583" y="597.5" width="0.8" height="15" fill="#6a6a6a"/>
<rect x="584" y="597.5" width="17" height="15" fill="url(#gBtnGray)"/>
<rect x="601" y="597.5" width="0.8" height="15" fill="#6a6a6a"/>
<rect x="602" y="597.5" width="17" height="15" fill="url(#gBtnGray)"/>
<rect x="619" y="597.5" width="0.8" height="15" fill="#6a6a6a"/>
<g transform="translate(551 599.5)"><path d="M2 7 Q1 3 4 3 L9 4 Q12 5 11 9 Q10 12 6 11.5 Q2 11 2 7 Z" fill="#eee" stroke="#333" stroke-width="1"/><path d="M10 0 V5 M7.5 2.5 H12.5" stroke="#111" stroke-width="1.3"/></g>
<g transform="translate(568.5 599.5)"><circle cx="5.5" cy="5.5" r="4.3" fill="#f4f8fc" stroke="#222" stroke-width="1.3"/><line x1="8.5" y1="8.5" x2="12" y2="12" stroke="#222" stroke-width="2"/></g>
<g transform="translate(586 599.5)"><circle cx="6.5" cy="6.5" r="5.8" fill="#ddd" stroke="#333" stroke-width="1.1"/><circle cx="6.5" cy="6.5" r="3" fill="#fff" stroke="#333" stroke-width="0.8"/></g>
<g transform="translate(604.5 599.5)"><rect x="0.5" y="3" width="11" height="9" fill="#fff" stroke="#222" stroke-width="1"/><path d="M1 1 H3 M5 1 H7 M9 1 H11" stroke="#222" stroke-width="1.5"/><path d="M4 5 L9 7.5 L4 10 Z" fill="#222"/></g>
<rect x="621" y="597" width="1" height="16" fill="#5a5a5a"/>
<rect x="640.5" y="597" width="1" height="16" fill="#5a5a5a"/>
<g transform="translate(645 599.5)"><path d="M6 1 V7 L1 12 M6 7 L11 12" fill="none" stroke="#f4f4f4" stroke-width="2.2"/><path d="M6 1 V7 L1 12 M6 7 L11 12" fill="none" stroke="#333" stroke-width="0.8"/></g>
<text x="657" y="609.5" font-size="10" fill="#111" textLength="15" lengthAdjust="spacingAndGlyphs">1:1</text>
<path d="M673 603.5 H678.5 L675.75 606.5 Z" fill="#111"/>
<rect x="681" y="597.5" width="1" height="15" fill="#6a6a6a"/>
<g transform="translate(684 599.5)"><path d="M6 1 V7 L1 12 M6 7 L11 12" fill="none" stroke="#fafafa" stroke-width="2.2"/><path d="M6 1 V7 L1 12 M6 7 L11 12" fill="none" stroke="#333" stroke-width="0.8"/><circle cx="11" cy="9" r="2.3" fill="#f8b010"/></g>
<g transform="translate(700 599.5)"><path d="M6 1 V7 L1 12 M6 7 L11 12" fill="none" stroke="#c8c8c8" stroke-width="2.2"/><path d="M6 1 V7 L1 12 M6 7 L11 12" fill="none" stroke="#8a8a8a" stroke-width="0.7"/></g>
<rect x="713.5" y="597" width="1" height="16" fill="#5a5a5a"/>
<g transform="translate(717 599.5)"><circle cx="6.5" cy="6.5" r="4.5" fill="none" stroke="#222" stroke-width="2.6" stroke-dasharray="1.7 1.2"/><circle cx="6.5" cy="6.5" r="2.5" fill="#f4f4f4" stroke="#222" stroke-width="1"/></g>
<g transform="translate(735 599.5)"><path d="M6 6 V3 Q6 0.5 8.5 0.5 Q11 0.5 11 3 V5" fill="none" stroke="#222" stroke-width="1.2"/><rect x="1" y="5.5" width="8" height="7" fill="#f4f4f4" stroke="#222" stroke-width="1"/><path d="M5 7.5 V10.5" stroke="#222"/></g>
<rect x="752.5" y="597.5" width="1" height="15" fill="#5a5a5a"/>
<rect x="754" y="598" width="36" height="14" fill="#8a8a8a"/>
<g transform="translate(757 599.5)"><rect x="0.5" y="1" width="7" height="6" fill="#d8e4f4" stroke="#5a6a8a" stroke-width="0.8"/><rect x="5" y="5" width="8" height="7" fill="#eef4fc" stroke="#2a3a5a" stroke-width="0.9"/></g>
<g transform="translate(773.5 599.5)"><rect x="1" y="0.5" width="10" height="10" fill="#e8eef8" stroke="#3a4a6a" stroke-width="0.9"/><path d="M5 9 L7.5 12 L13 5" fill="none" stroke="#18a030" stroke-width="1.8"/></g>
<rect x="790.5" y="597" width="1" height="16" fill="#5a5a5a"/>
<path d="M794.5 603.5 H799.5 L797 607 Z" fill="#111"/>
<rect x="801" y="597" width="1" height="16" fill="#5a5a5a"/>
<rect x="804.5" y="599.5" width="12" height="11" fill="#fafafa" stroke="#222" stroke-width="1.1"/><rect x="804.5" y="599.5" width="12" height="2" fill="#222"/>
</svg>
</body></html>
